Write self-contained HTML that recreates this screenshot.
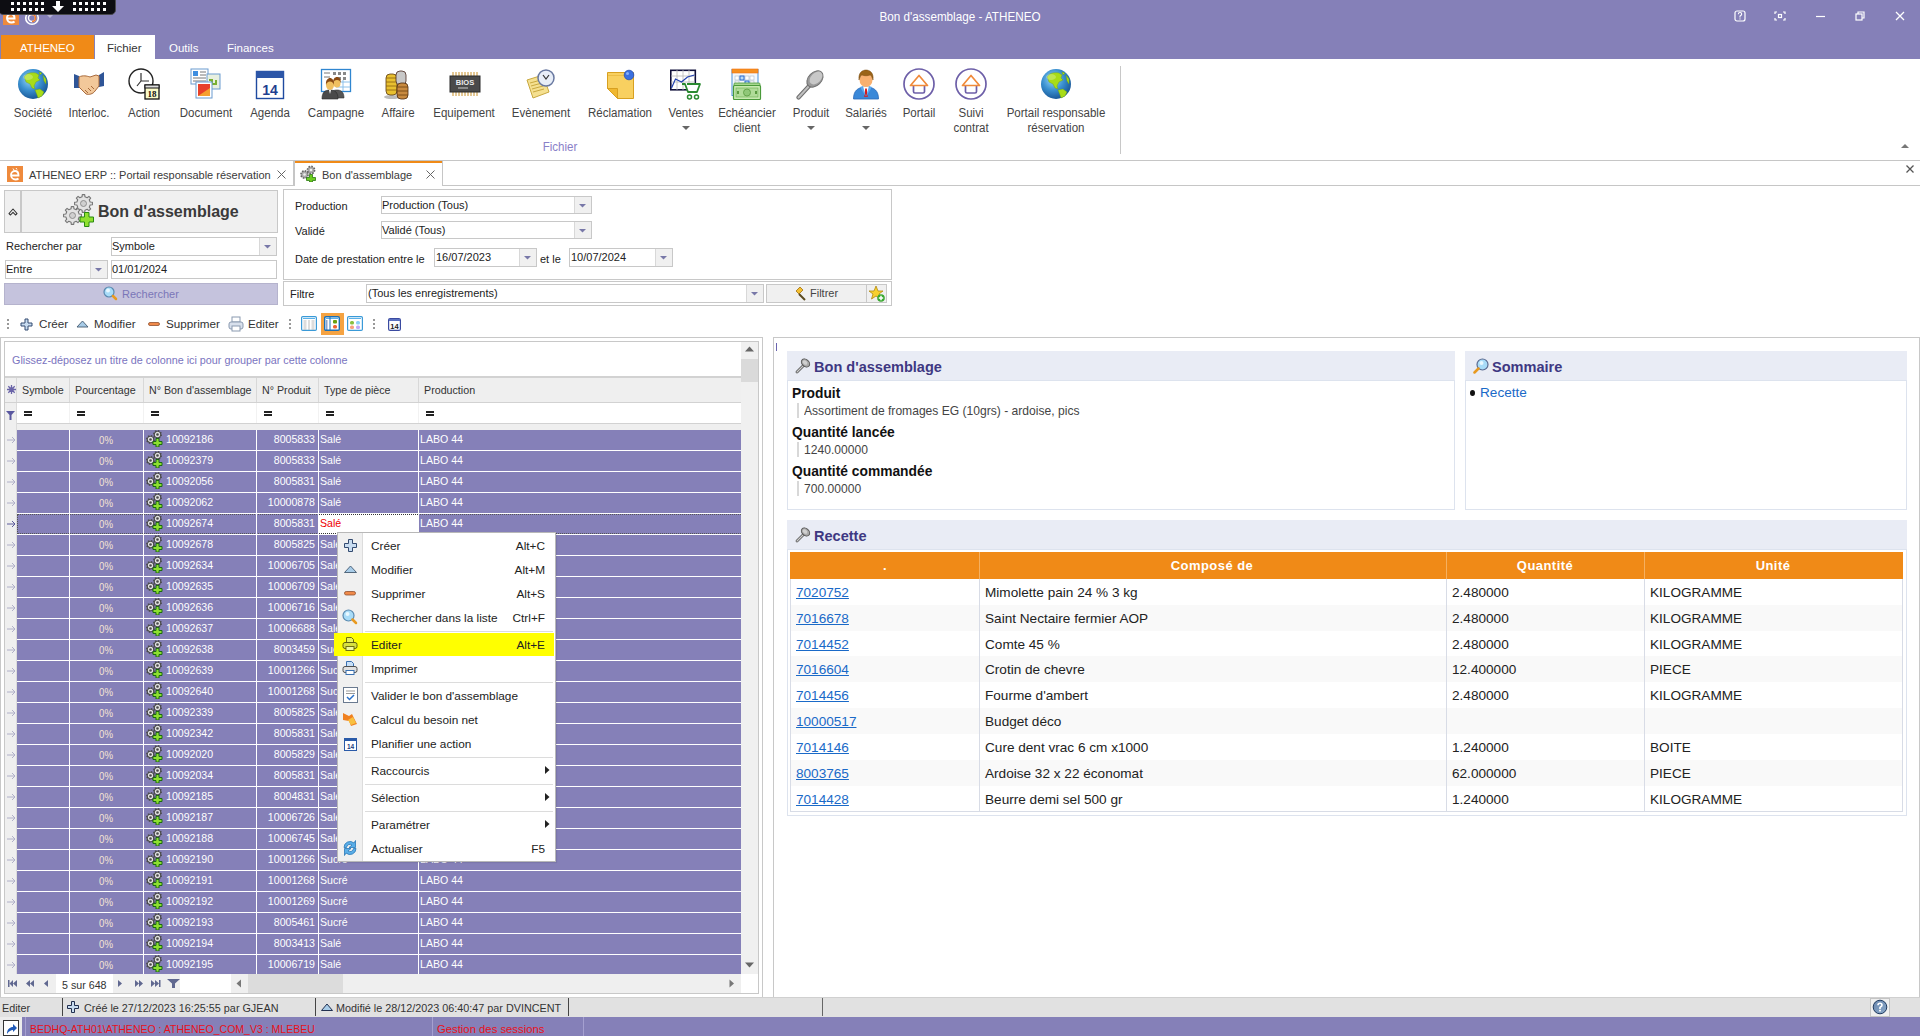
<!DOCTYPE html>
<html><head><meta charset="utf-8">
<style>
*{box-sizing:border-box;margin:0;padding:0}
html,body{width:1920px;height:1036px;overflow:hidden;background:#fff;font-family:"Liberation Sans",sans-serif;font-size:12px;color:#222}
.a{position:absolute}
.t{position:absolute;white-space:nowrap;line-height:14px}
.c{transform:translateX(-50%)}
.rl{position:absolute;white-space:nowrap;font-size:12px;color:#444;line-height:15px;transform:translateX(-50%) scaleX(.96);text-align:center}
.ic{position:absolute}
.sep{position:absolute;background:#c9c9c9}
.cell{position:absolute;white-space:nowrap;overflow:hidden;line-height:14px}
</style></head><body>
<!-- ================= TITLE BAR ================= -->
<div class="a" style="left:0;top:0;width:1920px;height:59px;background:#8580b8"></div>
<div class="t" style="left:960px;top:10px;color:#fff;font-size:12.3px;transform:translateX(-50%) scaleX(.95)">Bon d'assemblage - ATHENEO</div>
<!-- app icons -->
<div class="a" style="left:3px;top:9px;width:16px;height:16px;background:#ef8a3c"></div><svg class="ic" style="left:3px;top:9px" width="16" height="16" viewBox="0 0 16 16"><path d="M4.5 9.5h7c0-3-1.5-4.5-3.5-4.5S4 6.5 4 9s2 4.5 4.5 4.5c1.5 0 2.5-.5 3-1" fill="none" stroke="#fff" stroke-width="2"/></svg>
<svg class="ic" style="left:24px;top:10px" width="16" height="16" viewBox="0 0 16 16"><circle cx="8" cy="8" r="6.3" fill="none" stroke="#fff" stroke-width="1.6"/><circle cx="8" cy="8" r="3.5" fill="none" stroke="#fff" stroke-width="1.4"/><path d="M8 4.5a3.5 3.5 0 0 1 0 7" fill="none" stroke="#f07c2a" stroke-width="1.6"/></svg>
<svg class="ic" style="left:46px;top:14px" width="8" height="5"><path d="M0 0h8L4 4z" fill="#b7b3d6"/></svg>
<!-- remote desktop toolbar -->
<div class="a" style="left:-2px;top:-4px;width:118px;height:19px;background:#0d0d12;border:1px solid #4a4a4e;border-radius:5px"></div>
<svg class="ic" style="left:10px;top:1px" width="100" height="12" viewBox="0 0 100 12">
<g fill="#fff">
<rect x="1" y="1" width="3" height="3"/><rect x="7" y="1" width="3" height="3"/><rect x="13" y="1" width="3" height="3"/><rect x="19" y="1" width="3" height="3"/><rect x="25" y="1" width="3" height="3"/><rect x="31" y="1" width="3" height="3"/>
<rect x="1" y="7" width="3" height="3"/><rect x="7" y="7" width="3" height="3"/><rect x="13" y="7" width="3" height="3"/><rect x="19" y="7" width="3" height="3"/><rect x="25" y="7" width="3" height="3"/><rect x="31" y="7" width="3" height="3"/>
<rect x="63" y="1" width="3" height="3"/><rect x="69" y="1" width="3" height="3"/><rect x="75" y="1" width="3" height="3"/><rect x="81" y="1" width="3" height="3"/><rect x="87" y="1" width="3" height="3"/><rect x="93" y="1" width="3" height="3"/>
<rect x="63" y="7" width="3" height="3"/><rect x="69" y="7" width="3" height="3"/><rect x="75" y="7" width="3" height="3"/><rect x="81" y="7" width="3" height="3"/><rect x="87" y="7" width="3" height="3"/><rect x="93" y="7" width="3" height="3"/>
<path d="M46 0h4v5h4l-6 6-6-6h4z"/>
</g></svg>
<!-- window controls -->
<svg class="ic" style="left:1730px;top:8px" width="180" height="18" viewBox="0 0 180 18">
<g fill="none" stroke="#fff" stroke-width="1.2">
<rect x="5" y="3" width="10" height="10" rx="2"/>
<path d="M45 6V4h2M53 4h2v2M55 10v2h-2M47 12h-2v-2"/><rect x="48.5" y="6.5" width="3" height="3"/>
<path d="M86 8.5h9"/>
<rect x="126" y="6" width="6" height="6"/><path d="M128 6V4h6v6h-2"/>
<path d="M166 4l8 8M174 4l-8 8" stroke-width="1.3"/>
</g>
<path d="M8.3 6.3q0-1.8 1.7-1.8t1.7 1.6q0 1-1 1.5t-.7 1.4v.6" fill="none" stroke="#fff" stroke-width="1.1"/><rect x="9.45" y="10.4" width="1.1" height="1.1" fill="#fff"/>
</svg>
<!-- ribbon tabs -->
<div class="a" style="left:1px;top:35px;width:93px;height:24px;background:#f08a17"></div>
<div class="t" style="left:20px;top:41px;color:#fff;font-size:11.5px">ATHENEO</div>
<div class="a" style="left:95px;top:35px;width:60px;height:24px;background:#fff"></div>
<div class="t" style="left:107px;top:41px;color:#333;font-size:11.5px">Fichier</div>
<div class="t" style="left:169px;top:41px;color:#fff;font-size:11.5px">Outils</div>
<div class="t" style="left:227px;top:41px;color:#fff;font-size:11.5px">Finances</div>
<!-- ================= RIBBON BODY ================= -->
<div class="a" style="left:0;top:160px;width:1920px;height:1px;background:#c6c6c6"></div>
<!-- Société globe -->
<svg class="ic" style="left:17px;top:68px" width="32" height="32" viewBox="0 0 32 32">
<defs><radialGradient id="gb" cx="40%" cy="35%" r="65%"><stop offset="0" stop-color="#9ad8f8"/><stop offset=".55" stop-color="#3a90d0"/><stop offset="1" stop-color="#1a5a9a"/></radialGradient></defs>
<circle cx="16" cy="16" r="15" fill="url(#gb)"/>
<path d="M7 9C9 5 14 4 19 5l3 2-1 3 2 2-4 2-2 4 1 3-3-1-2-4-4-2-1-3zM18 22l5-1 4 3-2 4-4 2-1-3zM26 7l3 4 0 5-2-3zM22 4l3 1-2 2z" fill="#a8dc18" stroke="#6a9a10" stroke-width=".4"/><ellipse cx="11" cy="9" rx="5" ry="3" fill="#fff" opacity=".25"/>
</svg>
<!-- Interloc handshake -->
<svg class="ic" style="left:73px;top:70px" width="32" height="28" viewBox="0 0 32 28">
<path d="M1 4l5 2v12l-5 0z" fill="#2f5597"/><path d="M31 2l-5 3v12l5-1z" fill="#2f5597"/>
<path d="M6 7c4-2 8-1 11 0l6-2 3 1v10l-4 5c-2 3-6 4-9 3l-7-7V7z" fill="#f2c89a" stroke="#a86a3c" stroke-width="1"/>
<path d="M12 20l3 3M15 18l3 3M18 16l3 3" stroke="#a86a3c" stroke-width="1"/>
</svg>
<!-- Action clock+calendar -->
<svg class="ic" style="left:128px;top:68px" width="32" height="32" viewBox="0 0 32 32">
<circle cx="13" cy="13" r="12" fill="#fff" stroke="#222" stroke-width="1.4"/>
<path d="M13 5v8h8M13 13l-4 5" stroke="#333" stroke-width="1.2" fill="none"/>
<rect x="17" y="17" width="14" height="14" fill="#fafac8" stroke="#111" stroke-width="1.3"/>
<rect x="17" y="17" width="14" height="3" fill="#ddd" stroke="#111" stroke-width="1"/>
<text x="24" y="29" font-size="9" font-weight="bold" text-anchor="middle" fill="#111" font-family="Liberation Serif">18</text>
</svg>
<!-- Document -->
<svg class="ic" style="left:190px;top:68px" width="32" height="32" viewBox="0 0 32 32">
<rect x="1" y="1" width="17" height="15" fill="#fff" stroke="#6b9bd0"/><rect x="3" y="3" width="5" height="5" fill="#3e8ee0"/><path d="M10 4h6M10 7h6M3 10h13M3 13h13" stroke="#777"/>
<rect x="17" y="6" width="13" height="15" fill="#e8f0e0" stroke="#6b9bd0"/><path d="M19 12h3v4h4v-4" fill="none" stroke="#7ab030" stroke-width="2"/>
<rect x="6" y="14" width="16" height="16" fill="#fff" stroke="#6b9bd0"/><rect x="8" y="16" width="12" height="12" fill="#e8402a"/><path d="M8 28l12-8v8z" fill="#f5a030"/>
</svg>
<!-- Agenda -->
<svg class="ic" style="left:255px;top:70px" width="30" height="30" viewBox="0 0 30 30">
<rect x="1.5" y="1.5" width="27" height="27" fill="#fff" stroke="#1f4aa0" stroke-width="1.4"/>
<rect x="1" y="1" width="28" height="7" fill="#2c56a8"/>
<text x="15" y="25" font-size="14" font-weight="bold" text-anchor="middle" fill="#1f3f90" font-family="Liberation Sans">14</text>
</svg>
<!-- Campagne -->
<svg class="ic" style="left:320px;top:68px" width="32" height="32" viewBox="0 0 32 32">
<rect x="1.5" y="1.5" width="29" height="22" fill="#fff" stroke="#2f86d0" stroke-width="1.3"/>
<path d="M4 5h6M4 9h6" stroke="#777"/><g fill="#888"><rect x="13" y="4" width="3" height="3"/><rect x="18" y="4" width="3" height="3"/><rect x="23" y="4" width="3" height="3"/><rect x="18" y="9" width="3" height="3"/><rect x="23" y="9" width="3" height="3"/></g>
<path d="M16 14h14M16 19h14M23 12v11" stroke="#8cc0ea"/>
<path d="M10 30c0-6 3-8 7-8s7 2 7 8z" fill="#555" stroke="#333" stroke-width=".6"/>
<ellipse cx="17" cy="15" rx="3.5" ry="4.5" fill="#f0c060"/><path d="M13.3 15c-.5-4 1.5-6 3.7-6s4.2 2 3.7 6c-.5-2-1.5-3-3.7-3s-3.2 1-3.7 3z" fill="#8a4a12"/>
<path d="M2 31c0-7 3-9 8-9s8 2 8 9z" fill="#4a4a4a" stroke="#2a2a2a" stroke-width=".6"/>
<path d="M9 22l1 4 1-4z" fill="#fff"/>
<ellipse cx="10" cy="17" rx="4" ry="5" fill="#f0c060"/><path d="M6 17c-.5-5 2-7 4-7s4.5 2 4 7c-.5-2-2-3.5-4-3.5S6.5 15 6 17z" fill="#8a4a12"/>
</svg>
<!-- Affaire coins -->
<svg class="ic" style="left:383px;top:70px" width="30" height="30" viewBox="0 0 30 30">
<ellipse cx="9" cy="27" rx="8" ry="2" fill="#bbb"/>
<rect x="3" y="4" width="11" height="21" rx="4" fill="#e8c030" stroke="#5a3a10" stroke-width=".8"/>
<path d="M3 8h11M3 12h11M3 16h11M3 20h11" stroke="#8a6010" stroke-width=".8"/>
<rect x="13" y="1" width="10" height="14" rx="4" fill="#c8c8c8" stroke="#4a2a20" stroke-width=".8"/>
<rect x="14" y="13" width="11" height="16" rx="4" fill="#c88a40" stroke="#4a2a10" stroke-width=".8"/>
<path d="M14 17h11M14 21h11M14 25h11" stroke="#6a4010" stroke-width=".8"/>
</svg>
<!-- Equipement BIOS -->
<svg class="ic" style="left:449px;top:72px" width="32" height="24" viewBox="0 0 32 24">
<g stroke="#c89028" stroke-width="1"><path d="M4 0v4M7 0v4M10 0v4M13 0v4M16 0v4M19 0v4M22 0v4M25 0v4M28 0v4M4 20v4M7 20v4M10 20v4M13 20v4M16 20v4M19 20v4M22 20v4M25 20v4M28 20v4"/></g>
<rect x="1" y="4" width="30" height="16" fill="#4a4a4a" stroke="#2a2a2a"/>
<text x="16" y="13" font-size="7.5" font-weight="bold" text-anchor="middle" fill="#eee" font-family="Liberation Sans">BIOS</text>
<path d="M9 16h10" stroke="#ccc"/>
</svg>
<!-- Evènement -->
<svg class="ic" style="left:525px;top:68px" width="32" height="32" viewBox="0 0 32 32">
<path d="M2 12l16-5 6 17-16 6z" fill="#f5e090" stroke="#c8a840"/>
<path d="M5 15l11-3M6 18l11-3M7 21l11-3M8 24l11-3" stroke="#c8a840"/>
<circle cx="21" cy="10" r="8" fill="#e8eef8" stroke="#6878a0" stroke-width="1.5"/>
<path d="M18 7l3 4 3-4" stroke="#333" fill="none" stroke-width="1.2"/>
</svg>
<!-- Réclamation -->
<svg class="ic" style="left:604px;top:68px" width="32" height="32" viewBox="0 0 32 32">
<path d="M3.5 4.5h26v26h-16l-10-10z" fill="#f8d060" stroke="#d8a020" stroke-width="1"/>
<path d="M3.5 20.5h10v10z" fill="#f0b830" stroke="#d8a020" stroke-width="1" stroke-linejoin="round"/>
<path d="M4 7.5h25" stroke="#e8b840" stroke-width=".8"/>
<circle cx="25" cy="7" r="4.8" fill="#3a70e0" stroke="#2a50b0" stroke-width=".8"/><circle cx="23.5" cy="5.5" r="1.5" fill="#8ab0f8"/>
</svg>
<!-- Ventes -->
<svg class="ic" style="left:670px;top:68px" width="32" height="32" viewBox="0 0 32 32">
<rect x="0.8" y="2.3" width="24.5" height="19.5" fill="#fff" stroke="#10103a" stroke-width="1.6"/>
<path d="M1 8h24M1 14h24M7 2v20M13 2v20M19 2v20" stroke="#b8b8b8" stroke-width=".8"/>
<path d="M1.5 20l4-9 6 3 6-5 7-2" stroke="#2040b0" stroke-width="1.2" fill="none"/>
<path d="M12 16h3l3 8h9l3-8H17" fill="#fff" stroke="#2a8a30" stroke-width="1.8" stroke-linejoin="round"/>
<circle cx="19.5" cy="29" r="2" fill="#fff" stroke="#2a8a30" stroke-width="1.5"/><circle cx="26.5" cy="29" r="2" fill="#fff" stroke="#2a8a30" stroke-width="1.5"/>
</svg>
<!-- Echéancier -->
<svg class="ic" style="left:731px;top:68px" width="32" height="32" viewBox="0 0 32 32">
<rect x="1" y="1.5" width="26" height="26" fill="#f4f8fc" stroke="#4a90d8"/>
<rect x="1" y="1" width="26" height="4" fill="#f59020" stroke="#f07010" stroke-width=".6"/>
<g fill="#fff" stroke="#aab8c8" stroke-width=".6"><rect x="4" y="8" width="4" height="4"/><rect x="9" y="8" width="4" height="4"/><rect x="14" y="8" width="4" height="4"/><rect x="19" y="8" width="4" height="4"/><rect x="4" y="13" width="4" height="3"/><rect x="19" y="13" width="4" height="3"/></g>
<rect x="9" y="8" width="4" height="4" fill="#b8dcf8" stroke="#2a6ad0" stroke-width="1"/><rect x="14" y="13" width="4" height="3" fill="#b8dcf8" stroke="#2a6ad0" stroke-width="1"/>
<rect x="3" y="15" width="26" height="4" rx="1" fill="#a8d890" stroke="#4a9a3a" stroke-width=".8"/>
<rect x="2.5" y="17.5" width="27" height="14" rx="1" fill="#c8eab0" stroke="#4a9a3a" stroke-width="1.2"/>
<rect x="5" y="20" width="22" height="9" fill="#b0dc98" stroke="#6aaa50" stroke-width=".6"/>
<circle cx="16" cy="24.5" r="3.5" fill="#90c878" stroke="#5a9a40" stroke-width=".8"/>
<rect x="6" y="23" width="2" height="3" fill="#5a9a40"/><rect x="24" y="23" width="2" height="3" fill="#5a9a40"/>
</svg>
<!-- Produit pin -->
<svg class="ic" style="left:795px;top:68px" width="32" height="32" viewBox="0 0 32 32">
<path d="M3.5 29.5L15 17" stroke="#707070" stroke-width="4.2" stroke-linecap="round"/>
<path d="M3.5 29.5L15 17" stroke="#c0c0c0" stroke-width="2" stroke-linecap="round"/>
<ellipse cx="20" cy="11" rx="9.5" ry="6.5" transform="rotate(-45 20 11)" fill="#9a9a9a" stroke="#707070" stroke-width="1"/>
<ellipse cx="21" cy="10" rx="7.5" ry="5" transform="rotate(-45 21 10)" fill="#c8c8c8"/>
</svg>
<!-- Salariés -->
<svg class="ic" style="left:850px;top:68px" width="32" height="32" viewBox="0 0 32 32">
<path d="M3.5 31c0-8 4-12 12.5-12s12.5 4 12.5 12z" fill="#3a88d8" stroke="#2a68b8" stroke-width=".8"/>
<path d="M12 19l4 10 4-10z" fill="#fff"/><path d="M15.2 20.5h1.6l.9 8.5h-3.4z" fill="#d81818"/>
<path d="M10 19l6 10-3-11zM22 19l-6 10 3-11z" fill="#5aa8f0"/>
<ellipse cx="16" cy="12" rx="6.5" ry="7" fill="#f8b070"/>
<path d="M9 12c-1-8 4-10 7-10s8 2 7 10c-1-3-2-5-3-5-2 1-6 1-8 0-1 0-2 2-3 5z" fill="#9a6418" stroke="#7a4a10" stroke-width=".5"/>
</svg>
<!-- Portail -->
<svg class="ic" style="left:903px;top:68px" width="32" height="32" viewBox="0 0 32 32">
<circle cx="16" cy="16" r="15" fill="none" stroke="#6d5fa8" stroke-width="1.7"/>
<path d="M10.5 18v5.5q0 1.5 1.5 1.5h8q1.5 0 1.5-1.5V18" fill="none" stroke="#6d5fa8" stroke-width="1.7"/>
<path d="M7.5 17.5L16 7.5l8.5 10z" fill="none" stroke="#f08a3a" stroke-width="1.7" stroke-linejoin="round"/>
</svg>
<!-- Suivi contrat -->
<svg class="ic" style="left:955px;top:68px" width="32" height="32" viewBox="0 0 32 32">
<circle cx="16" cy="16" r="15" fill="none" stroke="#6d5fa8" stroke-width="1.7"/>
<path d="M10.5 18v5.5q0 1.5 1.5 1.5h8q1.5 0 1.5-1.5V18" fill="none" stroke="#6d5fa8" stroke-width="1.7"/>
<path d="M7.5 17.5L16 7.5l8.5 10z" fill="none" stroke="#f08a3a" stroke-width="1.7" stroke-linejoin="round"/>
</svg>
<!-- Portail responsable globe -->
<svg class="ic" style="left:1040px;top:68px" width="32" height="32" viewBox="0 0 32 32">
<circle cx="16" cy="16" r="15" fill="url(#gb)"/>
<path d="M7 9C9 5 14 4 19 5l3 2-1 3 2 2-4 2-2 4 1 3-3-1-2-4-4-2-1-3zM18 22l5-1 4 3-2 4-4 2-1-3zM26 7l3 4 0 5-2-3zM22 4l3 1-2 2z" fill="#a8dc18" stroke="#6a9a10" stroke-width=".4"/><ellipse cx="11" cy="9" rx="5" ry="3" fill="#fff" opacity=".25"/>
</svg>
<!-- labels -->
<div class="rl" style="left:33px;top:106px">Société</div>
<div class="rl" style="left:89px;top:106px">Interloc.</div>
<div class="rl" style="left:144px;top:106px">Action</div>
<div class="rl" style="left:206px;top:106px">Document</div>
<div class="rl" style="left:270px;top:106px">Agenda</div>
<div class="rl" style="left:336px;top:106px">Campagne</div>
<div class="rl" style="left:398px;top:106px">Affaire</div>
<div class="rl" style="left:464px;top:106px">Equipement</div>
<div class="rl" style="left:541px;top:106px">Evènement</div>
<div class="rl" style="left:620px;top:106px">Réclamation</div>
<div class="rl" style="left:686px;top:106px">Ventes</div>
<div class="rl" style="left:747px;top:106px">Echéancier<br>client</div>
<div class="rl" style="left:811px;top:106px">Produit</div>
<div class="rl" style="left:866px;top:106px">Salariés</div>
<div class="rl" style="left:919px;top:106px">Portail</div>
<div class="rl" style="left:971px;top:106px">Suivi<br>contrat</div>
<div class="rl" style="left:1056px;top:106px">Portail responsable<br>réservation</div>
<svg class="ic" style="left:681px;top:126px" width="10" height="5"><path d="M1 0h8L5 4z" fill="#666"/></svg>
<svg class="ic" style="left:806px;top:126px" width="10" height="5"><path d="M1 0h8L5 4z" fill="#666"/></svg>
<svg class="ic" style="left:861px;top:126px" width="10" height="5"><path d="M1 0h8L5 4z" fill="#666"/></svg>
<div class="rl" style="left:560px;top:140px;color:#8a80c8">Fichier</div>
<div class="a" style="left:1120px;top:66px;width:1px;height:88px;background:#c8c8c8"></div>
<svg class="ic" style="left:1900px;top:143px" width="10" height="6"><path d="M1 5l4-4 4 4z" fill="#777"/></svg>
<!-- ================= DOC TABS ================= -->
<div class="a" style="left:0;top:185px;width:1920px;height:1px;background:#c6c6c6"></div>
<div class="a" style="left:294px;top:161px;width:149px;height:25px;background:#fff;border-left:1px solid #c6c6c6;border-right:1px solid #c6c6c6"></div>
<div class="a" style="left:295px;top:161px;width:147px;height:2px;background:#f08a17"></div>
<div class="a" style="left:293px;top:161px;width:1px;height:24px;background:#c6c6c6"></div>
<!-- tab1 -->
<div class="a" style="left:7px;top:166px;width:16px;height:16px;background:#ef8a3c"></div>
<svg class="ic" style="left:7px;top:166px" width="16" height="16" viewBox="0 0 16 16"><path d="M4.5 9.5h7c0-3-1.5-4.5-3.5-4.5S4 6.5 4 9s2 4.5 4.5 4.5c1.5 0 2.5-.5 3-1" fill="none" stroke="#fff" stroke-width="1.8"/><path d="M6 2.5l1 1.5M9 2l1 1.5" stroke="#fff" stroke-width="1"/></svg>
<div class="t" style="left:29px;top:168px;font-size:11px;color:#3a3a3a">ATHENEO ERP :: Portail responsable réservation</div>
<svg class="ic" style="left:277px;top:170px" width="9" height="9"><path d="M.5 .5l8 8M8.5 .5l-8 8" stroke="#666" stroke-width="1"/></svg>
<!-- tab2 -->
<svg class="ic" style="left:300px;top:165px" width="17" height="17" viewBox="0 0 17 17">
<circle cx="11" cy="5" r="3.6" fill="#aaa" stroke="#666" stroke-width="1.6" stroke-dasharray="1.6 1.2"/><circle cx="11" cy="5" r="1.3" fill="#eee"/>
<circle cx="4.5" cy="9.5" r="3.6" fill="#aaa" stroke="#666" stroke-width="1.6" stroke-dasharray="1.6 1.2"/><circle cx="4.5" cy="9.5" r="1.3" fill="#eee"/>
<path d="M9.5 9.5h3v3h3v3h-3v1.5h-3V15.5h-3v-3h3z" fill="#6ccc20" stroke="#2a7a10" stroke-width=".8"/>
</svg>
<div class="t" style="left:322px;top:168px;font-size:11px;color:#3a3a3a">Bon d'assemblage</div>
<svg class="ic" style="left:426px;top:170px" width="9" height="9"><path d="M.5 .5l8 8M8.5 .5l-8 8" stroke="#666" stroke-width="1"/></svg>
<svg class="ic" style="left:1906px;top:165px" width="8" height="8"><path d="M.5 .5l7 7M7.5 .5l-7 7" stroke="#555" stroke-width="1.3"/></svg>

<!-- ================= LEFT SEARCH PANEL ================= -->
<div class="a" style="left:4px;top:190px;width:274px;height:43px;background:#f0f0f0;border:1px solid #c8c8c8"></div>
<div class="a" style="left:20px;top:191px;width:2px;height:41px;background:#c8c8c8"></div>
<svg class="ic" style="left:8px;top:207px" width="10" height="9" viewBox="0 0 10 9"><path d="M1 6.5L5 2l4 4.5L7.5 8 5 5.3 2.5 8z" fill="none" stroke="#333" stroke-width="1.1" stroke-linejoin="round"/></svg>
<!-- gears icon -->
<svg class="ic" style="left:62px;top:194px" width="34" height="34" viewBox="0 0 34 34">
<path d="M28.14 8.04 L30.42 8.27 L30.42 10.73 L28.14 10.96 L27.23 13.17 L28.68 14.93 L26.93 16.68 L25.17 15.23 L22.96 16.14 L22.73 18.42 L20.27 18.42 L20.04 16.14 L17.83 15.23 L16.07 16.68 L14.32 14.93 L15.77 13.17 L14.86 10.96 L12.58 10.73 L12.58 8.27 L14.86 8.04 L15.77 5.83 L14.32 4.07 L16.07 2.32 L17.83 3.77 L20.04 2.86 L20.27 0.58 L22.73 0.58 L22.96 2.86 L25.17 3.77 L26.93 2.32 L28.68 4.07 L27.23 5.83Z" fill="#e4e4e4" stroke="#777" stroke-width="1.1" stroke-linejoin="round"/><circle cx="21.5" cy="9.5" r="3" fill="#d0d0d0" stroke="#888" stroke-width=".9"/>
<path d="M17.14 20.04 L19.42 20.27 L19.42 22.73 L17.14 22.96 L16.23 25.17 L17.68 26.93 L15.93 28.68 L14.17 27.23 L11.96 28.14 L11.73 30.42 L9.27 30.42 L9.04 28.14 L6.83 27.23 L5.07 28.68 L3.32 26.93 L4.77 25.17 L3.86 22.96 L1.58 22.73 L1.58 20.27 L3.86 20.04 L4.77 17.83 L3.32 16.07 L5.07 14.32 L6.83 15.77 L9.04 14.86 L9.27 12.58 L11.73 12.58 L11.96 14.86 L14.17 15.77 L15.93 14.32 L17.68 16.07 L16.23 17.83Z" fill="#e4e4e4" stroke="#777" stroke-width="1.1" stroke-linejoin="round"/><circle cx="10.5" cy="21.5" r="3" fill="#d0d0d0" stroke="#888" stroke-width=".9"/>
<path d="M22.5 18.5h4.5v4.5h4.5v5h-4.5v4.5h-4.5v-4.5H18v-5h4.5z" fill="#90e030" stroke="#2a8a10" stroke-width="1"/>
</svg>
<div class="t" style="left:98px;top:202px;font-size:16px;line-height:20px;font-weight:bold;color:#3a3a3a">Bon d'assemblage</div>
<div class="t" style="left:6px;top:239px;font-size:11px;color:#222">Rechercher par</div>
<div class="a" style="left:111px;top:237px;width:166px;height:19px;background:#fff;border:1px solid #c8c8c8"></div>
<div class="a" style="left:259px;top:238px;width:17px;height:17px;background:#f0f0f0;border-left:1px solid #d8d8d8"></div>
<svg class="ic" style="left:264px;top:245px" width="8" height="4"><path d="M0 0h7L3.5 3.5z" fill="#7878a8"/></svg>
<div class="t" style="left:112px;top:239px;font-size:11px;color:#222">Symbole</div>
<div class="a" style="left:5px;top:260px;width:103px;height:19px;background:#fff;border:1px solid #c8c8c8"></div>
<div class="a" style="left:90px;top:261px;width:17px;height:17px;background:#f0f0f0;border-left:1px solid #d8d8d8"></div>
<svg class="ic" style="left:95px;top:268px" width="8" height="4"><path d="M0 0h7L3.5 3.5z" fill="#7878a8"/></svg>
<div class="t" style="left:6px;top:262px;font-size:11px;color:#222">Entre</div>
<div class="a" style="left:111px;top:260px;width:166px;height:19px;background:#fff;border:1px solid #c8c8c8"></div>
<div class="t" style="left:112px;top:262px;font-size:11px;color:#222">01/01/2024</div>
<div class="a" style="left:4px;top:283px;width:274px;height:22px;background:#c5c3dd;border:1px solid #b5b3cd"></div>
<svg class="ic" style="left:103px;top:286px" width="15" height="15" viewBox="0 0 15 15"><circle cx="6" cy="6" r="5" fill="#a8dcf8" stroke="#5a8ab0" stroke-width="1.2"/><circle cx="5" cy="4.5" r="2" fill="#e8f8ff"/><path d="M10 10l3 3" stroke="#e89a20" stroke-width="2.5" stroke-linecap="round"/></svg>
<div class="t" style="left:122px;top:287px;font-size:11px;color:#7a76b8">Rechercher</div>

<!-- ================= FILTER PANEL ================= -->
<div class="a" style="left:283px;top:189px;width:609px;height:91px;border:1px solid #c8c8c8;background:#fff"></div>
<div class="t" style="left:295px;top:199px;font-size:11px;color:#222">Production</div>
<div class="a" style="left:381px;top:196px;width:211px;height:18px;border:1px solid #c8c8c8;background:#fff"></div>
<div class="a" style="left:574px;top:197px;width:17px;height:16px;background:#f0f0f0;border-left:1px solid #d8d8d8"></div>
<svg class="ic" style="left:579px;top:204px" width="8" height="4"><path d="M0 0h7L3.5 3.5z" fill="#7878a8"/></svg>
<div class="t" style="left:382px;top:198px;font-size:11px;color:#222">Production (Tous)</div>
<div class="t" style="left:295px;top:224px;font-size:11px;color:#222">Validé</div>
<div class="a" style="left:381px;top:221px;width:211px;height:18px;border:1px solid #c8c8c8;background:#fff"></div>
<div class="a" style="left:574px;top:222px;width:17px;height:16px;background:#f0f0f0;border-left:1px solid #d8d8d8"></div>
<svg class="ic" style="left:579px;top:229px" width="8" height="4"><path d="M0 0h7L3.5 3.5z" fill="#7878a8"/></svg>
<div class="t" style="left:382px;top:223px;font-size:11px;color:#222">Validé (Tous)</div>
<div class="t" style="left:295px;top:252px;font-size:11px;color:#222">Date de prestation entre le</div>
<div class="a" style="left:434px;top:248px;width:103px;height:19px;border:1px solid #c8c8c8;background:#fff"></div>
<div class="a" style="left:519px;top:249px;width:17px;height:17px;background:#f0f0f0;border-left:1px solid #d8d8d8"></div>
<svg class="ic" style="left:524px;top:256px" width="8" height="4"><path d="M0 0h7L3.5 3.5z" fill="#7878a8"/></svg>
<div class="t" style="left:436px;top:250px;font-size:11px;color:#222">16/07/2023</div>
<div class="t" style="left:540px;top:252px;font-size:11px;color:#222">et le</div>
<div class="a" style="left:569px;top:248px;width:104px;height:19px;border:1px solid #c8c8c8;background:#fff"></div>
<div class="a" style="left:655px;top:249px;width:17px;height:17px;background:#f0f0f0;border-left:1px solid #d8d8d8"></div>
<svg class="ic" style="left:660px;top:256px" width="8" height="4"><path d="M0 0h7L3.5 3.5z" fill="#7878a8"/></svg>
<div class="t" style="left:571px;top:250px;font-size:11px;color:#222">10/07/2024</div>
<!-- filtre row -->
<div class="a" style="left:283px;top:281px;width:609px;height:25px;border:1px solid #c8c8c8;background:#fff"></div>
<div class="t" style="left:290px;top:287px;font-size:11px;color:#222">Filtre</div>
<div class="a" style="left:366px;top:284px;width:398px;height:19px;border:1px solid #c8c8c8;background:#fff"></div>
<div class="a" style="left:746px;top:285px;width:17px;height:17px;background:#f0f0f0;border-left:1px solid #d8d8d8"></div>
<svg class="ic" style="left:751px;top:292px" width="8" height="4"><path d="M0 0h7L3.5 3.5z" fill="#7878a8"/></svg>
<div class="t" style="left:368px;top:286px;font-size:11px;color:#222">(Tous les enregistrements)</div>
<div class="a" style="left:766px;top:284px;width:121px;height:19px;border:1px solid #c8c8c8;background:#f0f0f0"></div>
<div class="a" style="left:866px;top:285px;width:1px;height:17px;background:#c8c8c8"></div>
<svg class="ic" style="left:793px;top:286px" width="15" height="15" viewBox="0 0 15 15"><path d="M3 5l4-4 3 3-4 4z" fill="#f5c030" stroke="#a07010" stroke-width=".8"/><path d="M6 8l6 6" stroke="#5a4a20" stroke-width="2"/></svg>
<div class="t" style="left:810px;top:286px;font-size:11px;color:#444">Filtrer</div>
<svg class="ic" style="left:868px;top:285px" width="17" height="17" viewBox="0 0 17 17"><path d="M8 1l2 5h5l-4 3 1.5 5L8 11l-4.5 3L5 9 1 6h5z" fill="#f8d030" stroke="#b08810" stroke-width=".8"/><circle cx="13" cy="13" r="3.8" fill="#3aa830"/><path d="M13 10.8v4.4M10.8 13h4.4" stroke="#fff" stroke-width="1.5"/></svg>

<!-- ================= TOOLBAR ================= -->
<svg class="ic" style="left:7px;top:319px" width="3" height="11"><rect x="0" y="0" width="2" height="2" fill="#999"/><rect x="0" y="4" width="2" height="2" fill="#999"/><rect x="0" y="8" width="2" height="2" fill="#999"/></svg>
<svg class="ic" style="left:20px;top:318px" width="13" height="13" viewBox="0 0 13 13"><path d="M5 1h3v4h4v3H8v4H5V8H1V5h4z" fill="#c8dcf0" stroke="#334a70" stroke-width="1"/></svg>
<div class="t" style="left:39px;top:317px;font-size:11.7px;color:#333">Créer</div>
<svg class="ic" style="left:76px;top:320px" width="13" height="8" viewBox="0 0 13 8"><path d="M1 7l5.5-6 5.5 6z" fill="#a8cce8" stroke="#445a70" stroke-width=".9"/></svg>
<div class="t" style="left:94px;top:317px;font-size:11.7px;color:#333">Modifier</div>
<svg class="ic" style="left:148px;top:322px" width="12" height="4"><rect x=".5" y=".5" width="11" height="3" rx="1.5" fill="#f08a4a" stroke="#905030" stroke-width=".8"/></svg>
<div class="t" style="left:166px;top:317px;font-size:11.7px;color:#333">Supprimer</div>
<svg class="ic" style="left:228px;top:316px" width="16" height="16" viewBox="0 0 16 16"><rect x="4" y="1" width="8" height="5" fill="#fff" stroke="#8a9ab0"/><rect x="1" y="6" width="14" height="7" rx="2" fill="#d8e0ec" stroke="#8a9ab0"/><rect x="4" y="10" width="8" height="5" fill="#fff" stroke="#8a9ab0"/></svg>
<div class="t" style="left:248px;top:317px;font-size:11.7px;color:#333">Editer</div>
<svg class="ic" style="left:289px;top:319px" width="3" height="11"><rect x="0" y="0" width="2" height="2" fill="#999"/><rect x="0" y="4" width="2" height="2" fill="#999"/><rect x="0" y="8" width="2" height="2" fill="#999"/></svg>
<svg class="ic" style="left:301px;top:316px" width="16" height="15" viewBox="0 0 16 15"><rect x=".6" y=".6" width="14.8" height="13.8" rx="1.2" fill="#fff" stroke="#3a9ad8" stroke-width="1.2"/><rect x="2" y="2" width="12" height="1" fill="#5ab0e8"/><g stroke="#aaa" stroke-width=".8"><path d="M2.5 5h3M7 5h2M10.5 5h3M2.5 7h3M7 7h2M10.5 7h3M2.5 9h3M7 9h2M10.5 9h3M2.5 11h3M7 11h2M10.5 11h3M2.5 13h3M7 13h2M10.5 13h3"/></g></svg>
<div class="a" style="left:321px;top:313px;width:23px;height:22px;background:#f5a342"></div>
<svg class="ic" style="left:324px;top:316px" width="16" height="15" viewBox="0 0 16 15"><rect x=".7" y=".7" width="14.6" height="13.6" rx="1.2" fill="#fff" stroke="#1a70b8" stroke-width="1.4"/><rect x="2" y="2" width="12" height="1" fill="#5ab0e8"/><path d="M6 1v13" stroke="#1a70b8" stroke-width="1"/><g fill="#1a4a98"><rect x="2" y="4.5" width="1.5" height="1"/><rect x="2" y="6.5" width="1.5" height="1"/><rect x="2" y="8.5" width="1.5" height="1"/><rect x="2" y="10.5" width="1.5" height="1"/><rect x="2" y="12.5" width="1.5" height="1"/></g><rect x="9" y="4" width="4" height="3.5" rx="1" fill="#6aa010"/><rect x="9" y="9" width="4" height="3.5" rx="1.5" fill="#f06030"/></svg>
<svg class="ic" style="left:347px;top:316px" width="16" height="15" viewBox="0 0 16 15"><rect x=".6" y=".6" width="14.8" height="13.8" rx="1.2" fill="#fff" stroke="#3a9ad8" stroke-width="1.2"/><rect x="2" y="2" width="12" height="1" fill="#5ab0e8"/><rect x="3" y="5" width="4" height="3.5" rx="1.5" fill="#8ac040"/><rect x="9" y="5" width="4" height="3.5" rx="1.5" fill="#8ad0f8"/><rect x="3" y="9.5" width="4" height="3.5" rx="1.5" fill="#f8a080"/><rect x="9" y="9.5" width="4" height="3.5" rx="1.5" fill="#c0a8f8"/></svg>
<svg class="ic" style="left:373px;top:319px" width="3" height="11"><rect x="0" y="0" width="2" height="2" fill="#999"/><rect x="0" y="4" width="2" height="2" fill="#999"/><rect x="0" y="8" width="2" height="2" fill="#999"/></svg>
<svg class="ic" style="left:388px;top:318px" width="13" height="13" viewBox="0 0 13 13"><rect x=".6" y=".6" width="11.8" height="11.8" rx="1.5" fill="#fff" stroke="#3a4aa0" stroke-width="1.2"/><rect x="1" y="1" width="11" height="2" fill="#5a70c0"/><text x="6.5" y="11" font-size="7.5" text-anchor="middle" fill="#222" font-family="Liberation Sans" font-weight="bold">14</text></svg>
<!-- ================= GRID ================= -->
<div class="a" style="left:0;top:337px;width:763px;height:661px;border:1px solid #c8c8c8;border-left:1px solid #c8c8c8;background:#fff"></div>
<div class="a" style="left:4px;top:341px;width:755px;height:653px;border:1px solid #c8c8c8;background:#fff"></div>
<div class="t" style="left:12px;top:353px;font-size:10.8px;color:#7a74c0">Glissez-déposez un titre de colonne ici pour grouper par cette colonne</div>
<!-- header -->
<div class="a" style="left:5px;top:376px;width:736px;height:27px;background:#efefef;border-top:2px solid #d2d2d2;border-bottom:1px solid #d2d2d2"></div>
<div class="a" style="left:5px;top:403px;width:736px;height:21px;background:#fff;border-bottom:1px solid #d2d2d2"></div>
<div class="a" style="left:5px;top:424px;width:736px;height:6px;background:#efefef"></div>
<div class="a" style="left:5px;top:403px;width:12px;height:571px;background:#efefef;border-right:1px solid #dcdcdc"></div>

<div class="a" style="left:16px;top:378px;width:1px;height:24px;background:#d8d8d8"></div>
<div class="a" style="left:69px;top:378px;width:1px;height:24px;background:#d8d8d8"></div>
<div class="a" style="left:143px;top:378px;width:1px;height:24px;background:#d8d8d8"></div>
<div class="a" style="left:256px;top:378px;width:1px;height:24px;background:#d8d8d8"></div>
<div class="a" style="left:318px;top:378px;width:1px;height:24px;background:#d8d8d8"></div>
<div class="a" style="left:418px;top:378px;width:1px;height:24px;background:#d8d8d8"></div>
<div class="a" style="left:69px;top:403px;width:1px;height:20px;background:#f2f2f2"></div>
<div class="a" style="left:143px;top:403px;width:1px;height:20px;background:#f2f2f2"></div>
<div class="a" style="left:256px;top:403px;width:1px;height:20px;background:#f2f2f2"></div>
<div class="a" style="left:318px;top:403px;width:1px;height:20px;background:#f2f2f2"></div>
<div class="a" style="left:418px;top:403px;width:1px;height:20px;background:#f2f2f2"></div>
<svg class="ic" style="left:7px;top:385px" width="9" height="9" viewBox="0 0 9 9"><path d="M4.5 0v9M0 4.5h9M1.3 1.3l6.4 6.4M7.7 1.3l-6.4 6.4" stroke="#6a64a8" stroke-width="1.3"/><circle cx="4.5" cy="4.5" r="2.2" fill="#6a64a8"/></svg>
<svg class="ic" style="left:6px;top:411px" width="9" height="9" viewBox="0 0 9 9"><path d="M0 0h9L5.5 4v5h-2V4z" fill="#5a58a0"/></svg>
<div class="t" style="left:22px;top:383px;font-size:10.7px;color:#333">Symbole</div>
<div class="t" style="left:75px;top:383px;font-size:10.7px;color:#333">Pourcentage</div>
<div class="t" style="left:149px;top:383px;font-size:10.7px;color:#333">N° Bon d'assemblage</div>
<div class="t" style="left:262px;top:383px;font-size:10.7px;color:#333">N° Produit</div>
<div class="t" style="left:324px;top:383px;font-size:10.7px;color:#333">Type de pièce</div>
<div class="t" style="left:424px;top:383px;font-size:10.7px;color:#333">Production</div>
<div class="a" style="left:24px;top:411px;width:8px;height:1.5px;background:#222"></div><div class="a" style="left:24px;top:414px;width:8px;height:1.5px;background:#222"></div>
<div class="a" style="left:77px;top:411px;width:8px;height:1.5px;background:#222"></div><div class="a" style="left:77px;top:414px;width:8px;height:1.5px;background:#222"></div>
<div class="a" style="left:151px;top:411px;width:8px;height:1.5px;background:#222"></div><div class="a" style="left:151px;top:414px;width:8px;height:1.5px;background:#222"></div>
<div class="a" style="left:264px;top:411px;width:8px;height:1.5px;background:#222"></div><div class="a" style="left:264px;top:414px;width:8px;height:1.5px;background:#222"></div>
<div class="a" style="left:326px;top:411px;width:8px;height:1.5px;background:#222"></div><div class="a" style="left:326px;top:414px;width:8px;height:1.5px;background:#222"></div>
<div class="a" style="left:426px;top:411px;width:8px;height:1.5px;background:#222"></div><div class="a" style="left:426px;top:414px;width:8px;height:1.5px;background:#222"></div>
<div class="a" style="left:17px;top:430px;width:724px;height:20px;background:#8580b8"></div>
<svg class="ic" style="left:7px;top:436px" width="9" height="8" viewBox="0 0 9 8"><path d="M0 4h8M5 1l3 3-3 3" fill="none" stroke="#b0b0c8" stroke-width="1"/></svg>
<div class="t" style="left:106px;top:433px;font-size:10.5px;color:#f4e4d4;transform:translateX(-50%) scaleX(.92)">0%</div>
<svg class="ic" style="left:146px;top:430px" width="17" height="17" viewBox="0 0 17 17"><circle cx="11.5" cy="4.5" r="3.6" fill="#4a4a4a" stroke="#4a4a4a" stroke-width="1.8" stroke-dasharray="1.5 1.3"/><circle cx="11.5" cy="4.5" r="2" fill="none" stroke="#e0e0e0" stroke-width="1.3"/><circle cx="4.5" cy="9.5" r="3.6" fill="#4a4a4a" stroke="#4a4a4a" stroke-width="1.8" stroke-dasharray="1.5 1.3"/><circle cx="4.5" cy="9.5" r="2" fill="none" stroke="#e0e0e0" stroke-width="1.3"/><path d="M10 8.5h3v3h3v3h-3v2.5h-3v-2.5H7v-3h3z" fill="#8ee030" stroke="#1a6a10" stroke-width="1"/></svg>
<div class="t" style="left:166px;top:432px;font-size:10.6px;color:#fff">10092186</div>
<div class="t" style="left:315px;top:432px;font-size:10.6px;color:#fff;transform:translateX(-100%)">8005833</div>
<div class="t" style="left:320px;top:432px;font-size:10.6px;color:#fff">Salé</div>
<div class="t" style="left:420px;top:432px;font-size:10.6px;color:#fff">LABO 44</div>
<div class="a" style="left:17px;top:451px;width:724px;height:20px;background:#8580b8"></div>
<svg class="ic" style="left:7px;top:457px" width="9" height="8" viewBox="0 0 9 8"><path d="M0 4h8M5 1l3 3-3 3" fill="none" stroke="#b0b0c8" stroke-width="1"/></svg>
<div class="t" style="left:106px;top:454px;font-size:10.5px;color:#f4e4d4;transform:translateX(-50%) scaleX(.92)">0%</div>
<svg class="ic" style="left:146px;top:451px" width="17" height="17" viewBox="0 0 17 17"><circle cx="11.5" cy="4.5" r="3.6" fill="#4a4a4a" stroke="#4a4a4a" stroke-width="1.8" stroke-dasharray="1.5 1.3"/><circle cx="11.5" cy="4.5" r="2" fill="none" stroke="#e0e0e0" stroke-width="1.3"/><circle cx="4.5" cy="9.5" r="3.6" fill="#4a4a4a" stroke="#4a4a4a" stroke-width="1.8" stroke-dasharray="1.5 1.3"/><circle cx="4.5" cy="9.5" r="2" fill="none" stroke="#e0e0e0" stroke-width="1.3"/><path d="M10 8.5h3v3h3v3h-3v2.5h-3v-2.5H7v-3h3z" fill="#8ee030" stroke="#1a6a10" stroke-width="1"/></svg>
<div class="t" style="left:166px;top:453px;font-size:10.6px;color:#fff">10092379</div>
<div class="t" style="left:315px;top:453px;font-size:10.6px;color:#fff;transform:translateX(-100%)">8005833</div>
<div class="t" style="left:320px;top:453px;font-size:10.6px;color:#fff">Salé</div>
<div class="t" style="left:420px;top:453px;font-size:10.6px;color:#fff">LABO 44</div>
<div class="a" style="left:17px;top:472px;width:724px;height:20px;background:#8580b8"></div>
<svg class="ic" style="left:7px;top:478px" width="9" height="8" viewBox="0 0 9 8"><path d="M0 4h8M5 1l3 3-3 3" fill="none" stroke="#b0b0c8" stroke-width="1"/></svg>
<div class="t" style="left:106px;top:475px;font-size:10.5px;color:#f4e4d4;transform:translateX(-50%) scaleX(.92)">0%</div>
<svg class="ic" style="left:146px;top:472px" width="17" height="17" viewBox="0 0 17 17"><circle cx="11.5" cy="4.5" r="3.6" fill="#4a4a4a" stroke="#4a4a4a" stroke-width="1.8" stroke-dasharray="1.5 1.3"/><circle cx="11.5" cy="4.5" r="2" fill="none" stroke="#e0e0e0" stroke-width="1.3"/><circle cx="4.5" cy="9.5" r="3.6" fill="#4a4a4a" stroke="#4a4a4a" stroke-width="1.8" stroke-dasharray="1.5 1.3"/><circle cx="4.5" cy="9.5" r="2" fill="none" stroke="#e0e0e0" stroke-width="1.3"/><path d="M10 8.5h3v3h3v3h-3v2.5h-3v-2.5H7v-3h3z" fill="#8ee030" stroke="#1a6a10" stroke-width="1"/></svg>
<div class="t" style="left:166px;top:474px;font-size:10.6px;color:#fff">10092056</div>
<div class="t" style="left:315px;top:474px;font-size:10.6px;color:#fff;transform:translateX(-100%)">8005831</div>
<div class="t" style="left:320px;top:474px;font-size:10.6px;color:#fff">Salé</div>
<div class="t" style="left:420px;top:474px;font-size:10.6px;color:#fff">LABO 44</div>
<div class="a" style="left:17px;top:493px;width:724px;height:20px;background:#8580b8"></div>
<svg class="ic" style="left:7px;top:499px" width="9" height="8" viewBox="0 0 9 8"><path d="M0 4h8M5 1l3 3-3 3" fill="none" stroke="#b0b0c8" stroke-width="1"/></svg>
<div class="t" style="left:106px;top:496px;font-size:10.5px;color:#f4e4d4;transform:translateX(-50%) scaleX(.92)">0%</div>
<svg class="ic" style="left:146px;top:493px" width="17" height="17" viewBox="0 0 17 17"><circle cx="11.5" cy="4.5" r="3.6" fill="#4a4a4a" stroke="#4a4a4a" stroke-width="1.8" stroke-dasharray="1.5 1.3"/><circle cx="11.5" cy="4.5" r="2" fill="none" stroke="#e0e0e0" stroke-width="1.3"/><circle cx="4.5" cy="9.5" r="3.6" fill="#4a4a4a" stroke="#4a4a4a" stroke-width="1.8" stroke-dasharray="1.5 1.3"/><circle cx="4.5" cy="9.5" r="2" fill="none" stroke="#e0e0e0" stroke-width="1.3"/><path d="M10 8.5h3v3h3v3h-3v2.5h-3v-2.5H7v-3h3z" fill="#8ee030" stroke="#1a6a10" stroke-width="1"/></svg>
<div class="t" style="left:166px;top:495px;font-size:10.6px;color:#fff">10092062</div>
<div class="t" style="left:315px;top:495px;font-size:10.6px;color:#fff;transform:translateX(-100%)">10000878</div>
<div class="t" style="left:320px;top:495px;font-size:10.6px;color:#fff">Salé</div>
<div class="t" style="left:420px;top:495px;font-size:10.6px;color:#fff">LABO 44</div>
<div class="a" style="left:17px;top:514px;width:724px;height:20px;background:#8580b8"></div>
<svg class="ic" style="left:7px;top:520px" width="9" height="8" viewBox="0 0 9 8"><path d="M0 4h8M5 1l3 3-3 3" fill="none" stroke="#5a5a9a" stroke-width="1"/></svg>
<div class="t" style="left:106px;top:517px;font-size:10.5px;color:#f4e4d4;transform:translateX(-50%) scaleX(.92)">0%</div>
<svg class="ic" style="left:146px;top:514px" width="17" height="17" viewBox="0 0 17 17"><circle cx="11.5" cy="4.5" r="3.6" fill="#4a4a4a" stroke="#4a4a4a" stroke-width="1.8" stroke-dasharray="1.5 1.3"/><circle cx="11.5" cy="4.5" r="2" fill="none" stroke="#e0e0e0" stroke-width="1.3"/><circle cx="4.5" cy="9.5" r="3.6" fill="#4a4a4a" stroke="#4a4a4a" stroke-width="1.8" stroke-dasharray="1.5 1.3"/><circle cx="4.5" cy="9.5" r="2" fill="none" stroke="#e0e0e0" stroke-width="1.3"/><path d="M10 8.5h3v3h3v3h-3v2.5h-3v-2.5H7v-3h3z" fill="#8ee030" stroke="#1a6a10" stroke-width="1"/></svg>
<div class="t" style="left:166px;top:516px;font-size:10.6px;color:#fff">10092674</div>
<div class="t" style="left:315px;top:516px;font-size:10.6px;color:#fff;transform:translateX(-100%)">8005831</div>
<div class="a" style="left:319px;top:514px;width:99px;height:20px;background:#fff;border-top:1px dotted #333;border-bottom:1px dotted #333"></div>
<div class="t" style="left:320px;top:516px;font-size:10.6px;color:#e00">Salé</div>
<div class="a" style="left:17px;top:514px;width:302px;height:20px;border-top:1px dotted #555;border-bottom:1px dotted #555;border-left:1px dotted #555"></div>
<div class="a" style="left:418px;top:514px;width:323px;height:20px;border-top:1px dotted #555;border-bottom:1px dotted #555"></div>
<div class="t" style="left:420px;top:516px;font-size:10.6px;color:#fff">LABO 44</div>
<div class="a" style="left:17px;top:535px;width:724px;height:20px;background:#8580b8"></div>
<svg class="ic" style="left:7px;top:541px" width="9" height="8" viewBox="0 0 9 8"><path d="M0 4h8M5 1l3 3-3 3" fill="none" stroke="#b0b0c8" stroke-width="1"/></svg>
<div class="t" style="left:106px;top:538px;font-size:10.5px;color:#f4e4d4;transform:translateX(-50%) scaleX(.92)">0%</div>
<svg class="ic" style="left:146px;top:535px" width="17" height="17" viewBox="0 0 17 17"><circle cx="11.5" cy="4.5" r="3.6" fill="#4a4a4a" stroke="#4a4a4a" stroke-width="1.8" stroke-dasharray="1.5 1.3"/><circle cx="11.5" cy="4.5" r="2" fill="none" stroke="#e0e0e0" stroke-width="1.3"/><circle cx="4.5" cy="9.5" r="3.6" fill="#4a4a4a" stroke="#4a4a4a" stroke-width="1.8" stroke-dasharray="1.5 1.3"/><circle cx="4.5" cy="9.5" r="2" fill="none" stroke="#e0e0e0" stroke-width="1.3"/><path d="M10 8.5h3v3h3v3h-3v2.5h-3v-2.5H7v-3h3z" fill="#8ee030" stroke="#1a6a10" stroke-width="1"/></svg>
<div class="t" style="left:166px;top:537px;font-size:10.6px;color:#fff">10092678</div>
<div class="t" style="left:315px;top:537px;font-size:10.6px;color:#fff;transform:translateX(-100%)">8005825</div>
<div class="t" style="left:320px;top:537px;font-size:10.6px;color:#fff">Salé</div>
<div class="t" style="left:420px;top:537px;font-size:10.6px;color:#fff">LABO 44</div>
<div class="a" style="left:17px;top:556px;width:724px;height:20px;background:#8580b8"></div>
<svg class="ic" style="left:7px;top:562px" width="9" height="8" viewBox="0 0 9 8"><path d="M0 4h8M5 1l3 3-3 3" fill="none" stroke="#b0b0c8" stroke-width="1"/></svg>
<div class="t" style="left:106px;top:559px;font-size:10.5px;color:#f4e4d4;transform:translateX(-50%) scaleX(.92)">0%</div>
<svg class="ic" style="left:146px;top:556px" width="17" height="17" viewBox="0 0 17 17"><circle cx="11.5" cy="4.5" r="3.6" fill="#4a4a4a" stroke="#4a4a4a" stroke-width="1.8" stroke-dasharray="1.5 1.3"/><circle cx="11.5" cy="4.5" r="2" fill="none" stroke="#e0e0e0" stroke-width="1.3"/><circle cx="4.5" cy="9.5" r="3.6" fill="#4a4a4a" stroke="#4a4a4a" stroke-width="1.8" stroke-dasharray="1.5 1.3"/><circle cx="4.5" cy="9.5" r="2" fill="none" stroke="#e0e0e0" stroke-width="1.3"/><path d="M10 8.5h3v3h3v3h-3v2.5h-3v-2.5H7v-3h3z" fill="#8ee030" stroke="#1a6a10" stroke-width="1"/></svg>
<div class="t" style="left:166px;top:558px;font-size:10.6px;color:#fff">10092634</div>
<div class="t" style="left:315px;top:558px;font-size:10.6px;color:#fff;transform:translateX(-100%)">10006705</div>
<div class="t" style="left:320px;top:558px;font-size:10.6px;color:#fff">Salé</div>
<div class="t" style="left:420px;top:558px;font-size:10.6px;color:#fff">LABO 44</div>
<div class="a" style="left:17px;top:577px;width:724px;height:20px;background:#8580b8"></div>
<svg class="ic" style="left:7px;top:583px" width="9" height="8" viewBox="0 0 9 8"><path d="M0 4h8M5 1l3 3-3 3" fill="none" stroke="#b0b0c8" stroke-width="1"/></svg>
<div class="t" style="left:106px;top:580px;font-size:10.5px;color:#f4e4d4;transform:translateX(-50%) scaleX(.92)">0%</div>
<svg class="ic" style="left:146px;top:577px" width="17" height="17" viewBox="0 0 17 17"><circle cx="11.5" cy="4.5" r="3.6" fill="#4a4a4a" stroke="#4a4a4a" stroke-width="1.8" stroke-dasharray="1.5 1.3"/><circle cx="11.5" cy="4.5" r="2" fill="none" stroke="#e0e0e0" stroke-width="1.3"/><circle cx="4.5" cy="9.5" r="3.6" fill="#4a4a4a" stroke="#4a4a4a" stroke-width="1.8" stroke-dasharray="1.5 1.3"/><circle cx="4.5" cy="9.5" r="2" fill="none" stroke="#e0e0e0" stroke-width="1.3"/><path d="M10 8.5h3v3h3v3h-3v2.5h-3v-2.5H7v-3h3z" fill="#8ee030" stroke="#1a6a10" stroke-width="1"/></svg>
<div class="t" style="left:166px;top:579px;font-size:10.6px;color:#fff">10092635</div>
<div class="t" style="left:315px;top:579px;font-size:10.6px;color:#fff;transform:translateX(-100%)">10006709</div>
<div class="t" style="left:320px;top:579px;font-size:10.6px;color:#fff">Salé</div>
<div class="t" style="left:420px;top:579px;font-size:10.6px;color:#fff">LABO 44</div>
<div class="a" style="left:17px;top:598px;width:724px;height:20px;background:#8580b8"></div>
<svg class="ic" style="left:7px;top:604px" width="9" height="8" viewBox="0 0 9 8"><path d="M0 4h8M5 1l3 3-3 3" fill="none" stroke="#b0b0c8" stroke-width="1"/></svg>
<div class="t" style="left:106px;top:601px;font-size:10.5px;color:#f4e4d4;transform:translateX(-50%) scaleX(.92)">0%</div>
<svg class="ic" style="left:146px;top:598px" width="17" height="17" viewBox="0 0 17 17"><circle cx="11.5" cy="4.5" r="3.6" fill="#4a4a4a" stroke="#4a4a4a" stroke-width="1.8" stroke-dasharray="1.5 1.3"/><circle cx="11.5" cy="4.5" r="2" fill="none" stroke="#e0e0e0" stroke-width="1.3"/><circle cx="4.5" cy="9.5" r="3.6" fill="#4a4a4a" stroke="#4a4a4a" stroke-width="1.8" stroke-dasharray="1.5 1.3"/><circle cx="4.5" cy="9.5" r="2" fill="none" stroke="#e0e0e0" stroke-width="1.3"/><path d="M10 8.5h3v3h3v3h-3v2.5h-3v-2.5H7v-3h3z" fill="#8ee030" stroke="#1a6a10" stroke-width="1"/></svg>
<div class="t" style="left:166px;top:600px;font-size:10.6px;color:#fff">10092636</div>
<div class="t" style="left:315px;top:600px;font-size:10.6px;color:#fff;transform:translateX(-100%)">10006716</div>
<div class="t" style="left:320px;top:600px;font-size:10.6px;color:#fff">Salé</div>
<div class="t" style="left:420px;top:600px;font-size:10.6px;color:#fff">LABO 44</div>
<div class="a" style="left:17px;top:619px;width:724px;height:20px;background:#8580b8"></div>
<svg class="ic" style="left:7px;top:625px" width="9" height="8" viewBox="0 0 9 8"><path d="M0 4h8M5 1l3 3-3 3" fill="none" stroke="#b0b0c8" stroke-width="1"/></svg>
<div class="t" style="left:106px;top:622px;font-size:10.5px;color:#f4e4d4;transform:translateX(-50%) scaleX(.92)">0%</div>
<svg class="ic" style="left:146px;top:619px" width="17" height="17" viewBox="0 0 17 17"><circle cx="11.5" cy="4.5" r="3.6" fill="#4a4a4a" stroke="#4a4a4a" stroke-width="1.8" stroke-dasharray="1.5 1.3"/><circle cx="11.5" cy="4.5" r="2" fill="none" stroke="#e0e0e0" stroke-width="1.3"/><circle cx="4.5" cy="9.5" r="3.6" fill="#4a4a4a" stroke="#4a4a4a" stroke-width="1.8" stroke-dasharray="1.5 1.3"/><circle cx="4.5" cy="9.5" r="2" fill="none" stroke="#e0e0e0" stroke-width="1.3"/><path d="M10 8.5h3v3h3v3h-3v2.5h-3v-2.5H7v-3h3z" fill="#8ee030" stroke="#1a6a10" stroke-width="1"/></svg>
<div class="t" style="left:166px;top:621px;font-size:10.6px;color:#fff">10092637</div>
<div class="t" style="left:315px;top:621px;font-size:10.6px;color:#fff;transform:translateX(-100%)">10006688</div>
<div class="t" style="left:320px;top:621px;font-size:10.6px;color:#fff">Salé</div>
<div class="t" style="left:420px;top:621px;font-size:10.6px;color:#fff">LABO 44</div>
<div class="a" style="left:17px;top:640px;width:724px;height:20px;background:#8580b8"></div>
<svg class="ic" style="left:7px;top:646px" width="9" height="8" viewBox="0 0 9 8"><path d="M0 4h8M5 1l3 3-3 3" fill="none" stroke="#b0b0c8" stroke-width="1"/></svg>
<div class="t" style="left:106px;top:643px;font-size:10.5px;color:#f4e4d4;transform:translateX(-50%) scaleX(.92)">0%</div>
<svg class="ic" style="left:146px;top:640px" width="17" height="17" viewBox="0 0 17 17"><circle cx="11.5" cy="4.5" r="3.6" fill="#4a4a4a" stroke="#4a4a4a" stroke-width="1.8" stroke-dasharray="1.5 1.3"/><circle cx="11.5" cy="4.5" r="2" fill="none" stroke="#e0e0e0" stroke-width="1.3"/><circle cx="4.5" cy="9.5" r="3.6" fill="#4a4a4a" stroke="#4a4a4a" stroke-width="1.8" stroke-dasharray="1.5 1.3"/><circle cx="4.5" cy="9.5" r="2" fill="none" stroke="#e0e0e0" stroke-width="1.3"/><path d="M10 8.5h3v3h3v3h-3v2.5h-3v-2.5H7v-3h3z" fill="#8ee030" stroke="#1a6a10" stroke-width="1"/></svg>
<div class="t" style="left:166px;top:642px;font-size:10.6px;color:#fff">10092638</div>
<div class="t" style="left:315px;top:642px;font-size:10.6px;color:#fff;transform:translateX(-100%)">8003459</div>
<div class="t" style="left:320px;top:642px;font-size:10.6px;color:#fff">Sucré</div>
<div class="t" style="left:420px;top:642px;font-size:10.6px;color:#fff">LABO 44</div>
<div class="a" style="left:17px;top:661px;width:724px;height:20px;background:#8580b8"></div>
<svg class="ic" style="left:7px;top:667px" width="9" height="8" viewBox="0 0 9 8"><path d="M0 4h8M5 1l3 3-3 3" fill="none" stroke="#b0b0c8" stroke-width="1"/></svg>
<div class="t" style="left:106px;top:664px;font-size:10.5px;color:#f4e4d4;transform:translateX(-50%) scaleX(.92)">0%</div>
<svg class="ic" style="left:146px;top:661px" width="17" height="17" viewBox="0 0 17 17"><circle cx="11.5" cy="4.5" r="3.6" fill="#4a4a4a" stroke="#4a4a4a" stroke-width="1.8" stroke-dasharray="1.5 1.3"/><circle cx="11.5" cy="4.5" r="2" fill="none" stroke="#e0e0e0" stroke-width="1.3"/><circle cx="4.5" cy="9.5" r="3.6" fill="#4a4a4a" stroke="#4a4a4a" stroke-width="1.8" stroke-dasharray="1.5 1.3"/><circle cx="4.5" cy="9.5" r="2" fill="none" stroke="#e0e0e0" stroke-width="1.3"/><path d="M10 8.5h3v3h3v3h-3v2.5h-3v-2.5H7v-3h3z" fill="#8ee030" stroke="#1a6a10" stroke-width="1"/></svg>
<div class="t" style="left:166px;top:663px;font-size:10.6px;color:#fff">10092639</div>
<div class="t" style="left:315px;top:663px;font-size:10.6px;color:#fff;transform:translateX(-100%)">10001266</div>
<div class="t" style="left:320px;top:663px;font-size:10.6px;color:#fff">Sucré</div>
<div class="t" style="left:420px;top:663px;font-size:10.6px;color:#fff">LABO 44</div>
<div class="a" style="left:17px;top:682px;width:724px;height:20px;background:#8580b8"></div>
<svg class="ic" style="left:7px;top:688px" width="9" height="8" viewBox="0 0 9 8"><path d="M0 4h8M5 1l3 3-3 3" fill="none" stroke="#b0b0c8" stroke-width="1"/></svg>
<div class="t" style="left:106px;top:685px;font-size:10.5px;color:#f4e4d4;transform:translateX(-50%) scaleX(.92)">0%</div>
<svg class="ic" style="left:146px;top:682px" width="17" height="17" viewBox="0 0 17 17"><circle cx="11.5" cy="4.5" r="3.6" fill="#4a4a4a" stroke="#4a4a4a" stroke-width="1.8" stroke-dasharray="1.5 1.3"/><circle cx="11.5" cy="4.5" r="2" fill="none" stroke="#e0e0e0" stroke-width="1.3"/><circle cx="4.5" cy="9.5" r="3.6" fill="#4a4a4a" stroke="#4a4a4a" stroke-width="1.8" stroke-dasharray="1.5 1.3"/><circle cx="4.5" cy="9.5" r="2" fill="none" stroke="#e0e0e0" stroke-width="1.3"/><path d="M10 8.5h3v3h3v3h-3v2.5h-3v-2.5H7v-3h3z" fill="#8ee030" stroke="#1a6a10" stroke-width="1"/></svg>
<div class="t" style="left:166px;top:684px;font-size:10.6px;color:#fff">10092640</div>
<div class="t" style="left:315px;top:684px;font-size:10.6px;color:#fff;transform:translateX(-100%)">10001268</div>
<div class="t" style="left:320px;top:684px;font-size:10.6px;color:#fff">Sucré</div>
<div class="t" style="left:420px;top:684px;font-size:10.6px;color:#fff">LABO 44</div>
<div class="a" style="left:17px;top:703px;width:724px;height:20px;background:#8580b8"></div>
<svg class="ic" style="left:7px;top:709px" width="9" height="8" viewBox="0 0 9 8"><path d="M0 4h8M5 1l3 3-3 3" fill="none" stroke="#b0b0c8" stroke-width="1"/></svg>
<div class="t" style="left:106px;top:706px;font-size:10.5px;color:#f4e4d4;transform:translateX(-50%) scaleX(.92)">0%</div>
<svg class="ic" style="left:146px;top:703px" width="17" height="17" viewBox="0 0 17 17"><circle cx="11.5" cy="4.5" r="3.6" fill="#4a4a4a" stroke="#4a4a4a" stroke-width="1.8" stroke-dasharray="1.5 1.3"/><circle cx="11.5" cy="4.5" r="2" fill="none" stroke="#e0e0e0" stroke-width="1.3"/><circle cx="4.5" cy="9.5" r="3.6" fill="#4a4a4a" stroke="#4a4a4a" stroke-width="1.8" stroke-dasharray="1.5 1.3"/><circle cx="4.5" cy="9.5" r="2" fill="none" stroke="#e0e0e0" stroke-width="1.3"/><path d="M10 8.5h3v3h3v3h-3v2.5h-3v-2.5H7v-3h3z" fill="#8ee030" stroke="#1a6a10" stroke-width="1"/></svg>
<div class="t" style="left:166px;top:705px;font-size:10.6px;color:#fff">10092339</div>
<div class="t" style="left:315px;top:705px;font-size:10.6px;color:#fff;transform:translateX(-100%)">8005825</div>
<div class="t" style="left:320px;top:705px;font-size:10.6px;color:#fff">Salé</div>
<div class="t" style="left:420px;top:705px;font-size:10.6px;color:#fff">LABO 44</div>
<div class="a" style="left:17px;top:724px;width:724px;height:20px;background:#8580b8"></div>
<svg class="ic" style="left:7px;top:730px" width="9" height="8" viewBox="0 0 9 8"><path d="M0 4h8M5 1l3 3-3 3" fill="none" stroke="#b0b0c8" stroke-width="1"/></svg>
<div class="t" style="left:106px;top:727px;font-size:10.5px;color:#f4e4d4;transform:translateX(-50%) scaleX(.92)">0%</div>
<svg class="ic" style="left:146px;top:724px" width="17" height="17" viewBox="0 0 17 17"><circle cx="11.5" cy="4.5" r="3.6" fill="#4a4a4a" stroke="#4a4a4a" stroke-width="1.8" stroke-dasharray="1.5 1.3"/><circle cx="11.5" cy="4.5" r="2" fill="none" stroke="#e0e0e0" stroke-width="1.3"/><circle cx="4.5" cy="9.5" r="3.6" fill="#4a4a4a" stroke="#4a4a4a" stroke-width="1.8" stroke-dasharray="1.5 1.3"/><circle cx="4.5" cy="9.5" r="2" fill="none" stroke="#e0e0e0" stroke-width="1.3"/><path d="M10 8.5h3v3h3v3h-3v2.5h-3v-2.5H7v-3h3z" fill="#8ee030" stroke="#1a6a10" stroke-width="1"/></svg>
<div class="t" style="left:166px;top:726px;font-size:10.6px;color:#fff">10092342</div>
<div class="t" style="left:315px;top:726px;font-size:10.6px;color:#fff;transform:translateX(-100%)">8005831</div>
<div class="t" style="left:320px;top:726px;font-size:10.6px;color:#fff">Salé</div>
<div class="t" style="left:420px;top:726px;font-size:10.6px;color:#fff">LABO 44</div>
<div class="a" style="left:17px;top:745px;width:724px;height:20px;background:#8580b8"></div>
<svg class="ic" style="left:7px;top:751px" width="9" height="8" viewBox="0 0 9 8"><path d="M0 4h8M5 1l3 3-3 3" fill="none" stroke="#b0b0c8" stroke-width="1"/></svg>
<div class="t" style="left:106px;top:748px;font-size:10.5px;color:#f4e4d4;transform:translateX(-50%) scaleX(.92)">0%</div>
<svg class="ic" style="left:146px;top:745px" width="17" height="17" viewBox="0 0 17 17"><circle cx="11.5" cy="4.5" r="3.6" fill="#4a4a4a" stroke="#4a4a4a" stroke-width="1.8" stroke-dasharray="1.5 1.3"/><circle cx="11.5" cy="4.5" r="2" fill="none" stroke="#e0e0e0" stroke-width="1.3"/><circle cx="4.5" cy="9.5" r="3.6" fill="#4a4a4a" stroke="#4a4a4a" stroke-width="1.8" stroke-dasharray="1.5 1.3"/><circle cx="4.5" cy="9.5" r="2" fill="none" stroke="#e0e0e0" stroke-width="1.3"/><path d="M10 8.5h3v3h3v3h-3v2.5h-3v-2.5H7v-3h3z" fill="#8ee030" stroke="#1a6a10" stroke-width="1"/></svg>
<div class="t" style="left:166px;top:747px;font-size:10.6px;color:#fff">10092020</div>
<div class="t" style="left:315px;top:747px;font-size:10.6px;color:#fff;transform:translateX(-100%)">8005829</div>
<div class="t" style="left:320px;top:747px;font-size:10.6px;color:#fff">Salé</div>
<div class="t" style="left:420px;top:747px;font-size:10.6px;color:#fff">LABO 44</div>
<div class="a" style="left:17px;top:766px;width:724px;height:20px;background:#8580b8"></div>
<svg class="ic" style="left:7px;top:772px" width="9" height="8" viewBox="0 0 9 8"><path d="M0 4h8M5 1l3 3-3 3" fill="none" stroke="#b0b0c8" stroke-width="1"/></svg>
<div class="t" style="left:106px;top:769px;font-size:10.5px;color:#f4e4d4;transform:translateX(-50%) scaleX(.92)">0%</div>
<svg class="ic" style="left:146px;top:766px" width="17" height="17" viewBox="0 0 17 17"><circle cx="11.5" cy="4.5" r="3.6" fill="#4a4a4a" stroke="#4a4a4a" stroke-width="1.8" stroke-dasharray="1.5 1.3"/><circle cx="11.5" cy="4.5" r="2" fill="none" stroke="#e0e0e0" stroke-width="1.3"/><circle cx="4.5" cy="9.5" r="3.6" fill="#4a4a4a" stroke="#4a4a4a" stroke-width="1.8" stroke-dasharray="1.5 1.3"/><circle cx="4.5" cy="9.5" r="2" fill="none" stroke="#e0e0e0" stroke-width="1.3"/><path d="M10 8.5h3v3h3v3h-3v2.5h-3v-2.5H7v-3h3z" fill="#8ee030" stroke="#1a6a10" stroke-width="1"/></svg>
<div class="t" style="left:166px;top:768px;font-size:10.6px;color:#fff">10092034</div>
<div class="t" style="left:315px;top:768px;font-size:10.6px;color:#fff;transform:translateX(-100%)">8005831</div>
<div class="t" style="left:320px;top:768px;font-size:10.6px;color:#fff">Salé</div>
<div class="t" style="left:420px;top:768px;font-size:10.6px;color:#fff">LABO 44</div>
<div class="a" style="left:17px;top:787px;width:724px;height:20px;background:#8580b8"></div>
<svg class="ic" style="left:7px;top:793px" width="9" height="8" viewBox="0 0 9 8"><path d="M0 4h8M5 1l3 3-3 3" fill="none" stroke="#b0b0c8" stroke-width="1"/></svg>
<div class="t" style="left:106px;top:790px;font-size:10.5px;color:#f4e4d4;transform:translateX(-50%) scaleX(.92)">0%</div>
<svg class="ic" style="left:146px;top:787px" width="17" height="17" viewBox="0 0 17 17"><circle cx="11.5" cy="4.5" r="3.6" fill="#4a4a4a" stroke="#4a4a4a" stroke-width="1.8" stroke-dasharray="1.5 1.3"/><circle cx="11.5" cy="4.5" r="2" fill="none" stroke="#e0e0e0" stroke-width="1.3"/><circle cx="4.5" cy="9.5" r="3.6" fill="#4a4a4a" stroke="#4a4a4a" stroke-width="1.8" stroke-dasharray="1.5 1.3"/><circle cx="4.5" cy="9.5" r="2" fill="none" stroke="#e0e0e0" stroke-width="1.3"/><path d="M10 8.5h3v3h3v3h-3v2.5h-3v-2.5H7v-3h3z" fill="#8ee030" stroke="#1a6a10" stroke-width="1"/></svg>
<div class="t" style="left:166px;top:789px;font-size:10.6px;color:#fff">10092185</div>
<div class="t" style="left:315px;top:789px;font-size:10.6px;color:#fff;transform:translateX(-100%)">8004831</div>
<div class="t" style="left:320px;top:789px;font-size:10.6px;color:#fff">Salé</div>
<div class="t" style="left:420px;top:789px;font-size:10.6px;color:#fff">LABO 44</div>
<div class="a" style="left:17px;top:808px;width:724px;height:20px;background:#8580b8"></div>
<svg class="ic" style="left:7px;top:814px" width="9" height="8" viewBox="0 0 9 8"><path d="M0 4h8M5 1l3 3-3 3" fill="none" stroke="#b0b0c8" stroke-width="1"/></svg>
<div class="t" style="left:106px;top:811px;font-size:10.5px;color:#f4e4d4;transform:translateX(-50%) scaleX(.92)">0%</div>
<svg class="ic" style="left:146px;top:808px" width="17" height="17" viewBox="0 0 17 17"><circle cx="11.5" cy="4.5" r="3.6" fill="#4a4a4a" stroke="#4a4a4a" stroke-width="1.8" stroke-dasharray="1.5 1.3"/><circle cx="11.5" cy="4.5" r="2" fill="none" stroke="#e0e0e0" stroke-width="1.3"/><circle cx="4.5" cy="9.5" r="3.6" fill="#4a4a4a" stroke="#4a4a4a" stroke-width="1.8" stroke-dasharray="1.5 1.3"/><circle cx="4.5" cy="9.5" r="2" fill="none" stroke="#e0e0e0" stroke-width="1.3"/><path d="M10 8.5h3v3h3v3h-3v2.5h-3v-2.5H7v-3h3z" fill="#8ee030" stroke="#1a6a10" stroke-width="1"/></svg>
<div class="t" style="left:166px;top:810px;font-size:10.6px;color:#fff">10092187</div>
<div class="t" style="left:315px;top:810px;font-size:10.6px;color:#fff;transform:translateX(-100%)">10006726</div>
<div class="t" style="left:320px;top:810px;font-size:10.6px;color:#fff">Salé</div>
<div class="t" style="left:420px;top:810px;font-size:10.6px;color:#fff">LABO 44</div>
<div class="a" style="left:17px;top:829px;width:724px;height:20px;background:#8580b8"></div>
<svg class="ic" style="left:7px;top:835px" width="9" height="8" viewBox="0 0 9 8"><path d="M0 4h8M5 1l3 3-3 3" fill="none" stroke="#b0b0c8" stroke-width="1"/></svg>
<div class="t" style="left:106px;top:832px;font-size:10.5px;color:#f4e4d4;transform:translateX(-50%) scaleX(.92)">0%</div>
<svg class="ic" style="left:146px;top:829px" width="17" height="17" viewBox="0 0 17 17"><circle cx="11.5" cy="4.5" r="3.6" fill="#4a4a4a" stroke="#4a4a4a" stroke-width="1.8" stroke-dasharray="1.5 1.3"/><circle cx="11.5" cy="4.5" r="2" fill="none" stroke="#e0e0e0" stroke-width="1.3"/><circle cx="4.5" cy="9.5" r="3.6" fill="#4a4a4a" stroke="#4a4a4a" stroke-width="1.8" stroke-dasharray="1.5 1.3"/><circle cx="4.5" cy="9.5" r="2" fill="none" stroke="#e0e0e0" stroke-width="1.3"/><path d="M10 8.5h3v3h3v3h-3v2.5h-3v-2.5H7v-3h3z" fill="#8ee030" stroke="#1a6a10" stroke-width="1"/></svg>
<div class="t" style="left:166px;top:831px;font-size:10.6px;color:#fff">10092188</div>
<div class="t" style="left:315px;top:831px;font-size:10.6px;color:#fff;transform:translateX(-100%)">10006745</div>
<div class="t" style="left:320px;top:831px;font-size:10.6px;color:#fff">Salé</div>
<div class="t" style="left:420px;top:831px;font-size:10.6px;color:#fff">LABO 44</div>
<div class="a" style="left:17px;top:850px;width:724px;height:20px;background:#8580b8"></div>
<svg class="ic" style="left:7px;top:856px" width="9" height="8" viewBox="0 0 9 8"><path d="M0 4h8M5 1l3 3-3 3" fill="none" stroke="#b0b0c8" stroke-width="1"/></svg>
<div class="t" style="left:106px;top:853px;font-size:10.5px;color:#f4e4d4;transform:translateX(-50%) scaleX(.92)">0%</div>
<svg class="ic" style="left:146px;top:850px" width="17" height="17" viewBox="0 0 17 17"><circle cx="11.5" cy="4.5" r="3.6" fill="#4a4a4a" stroke="#4a4a4a" stroke-width="1.8" stroke-dasharray="1.5 1.3"/><circle cx="11.5" cy="4.5" r="2" fill="none" stroke="#e0e0e0" stroke-width="1.3"/><circle cx="4.5" cy="9.5" r="3.6" fill="#4a4a4a" stroke="#4a4a4a" stroke-width="1.8" stroke-dasharray="1.5 1.3"/><circle cx="4.5" cy="9.5" r="2" fill="none" stroke="#e0e0e0" stroke-width="1.3"/><path d="M10 8.5h3v3h3v3h-3v2.5h-3v-2.5H7v-3h3z" fill="#8ee030" stroke="#1a6a10" stroke-width="1"/></svg>
<div class="t" style="left:166px;top:852px;font-size:10.6px;color:#fff">10092190</div>
<div class="t" style="left:315px;top:852px;font-size:10.6px;color:#fff;transform:translateX(-100%)">10001266</div>
<div class="t" style="left:320px;top:852px;font-size:10.6px;color:#fff">Sucré</div>
<div class="t" style="left:420px;top:852px;font-size:10.6px;color:#fff">LABO 44</div>
<div class="a" style="left:17px;top:871px;width:724px;height:20px;background:#8580b8"></div>
<svg class="ic" style="left:7px;top:877px" width="9" height="8" viewBox="0 0 9 8"><path d="M0 4h8M5 1l3 3-3 3" fill="none" stroke="#b0b0c8" stroke-width="1"/></svg>
<div class="t" style="left:106px;top:874px;font-size:10.5px;color:#f4e4d4;transform:translateX(-50%) scaleX(.92)">0%</div>
<svg class="ic" style="left:146px;top:871px" width="17" height="17" viewBox="0 0 17 17"><circle cx="11.5" cy="4.5" r="3.6" fill="#4a4a4a" stroke="#4a4a4a" stroke-width="1.8" stroke-dasharray="1.5 1.3"/><circle cx="11.5" cy="4.5" r="2" fill="none" stroke="#e0e0e0" stroke-width="1.3"/><circle cx="4.5" cy="9.5" r="3.6" fill="#4a4a4a" stroke="#4a4a4a" stroke-width="1.8" stroke-dasharray="1.5 1.3"/><circle cx="4.5" cy="9.5" r="2" fill="none" stroke="#e0e0e0" stroke-width="1.3"/><path d="M10 8.5h3v3h3v3h-3v2.5h-3v-2.5H7v-3h3z" fill="#8ee030" stroke="#1a6a10" stroke-width="1"/></svg>
<div class="t" style="left:166px;top:873px;font-size:10.6px;color:#fff">10092191</div>
<div class="t" style="left:315px;top:873px;font-size:10.6px;color:#fff;transform:translateX(-100%)">10001268</div>
<div class="t" style="left:320px;top:873px;font-size:10.6px;color:#fff">Sucré</div>
<div class="t" style="left:420px;top:873px;font-size:10.6px;color:#fff">LABO 44</div>
<div class="a" style="left:17px;top:892px;width:724px;height:20px;background:#8580b8"></div>
<svg class="ic" style="left:7px;top:898px" width="9" height="8" viewBox="0 0 9 8"><path d="M0 4h8M5 1l3 3-3 3" fill="none" stroke="#b0b0c8" stroke-width="1"/></svg>
<div class="t" style="left:106px;top:895px;font-size:10.5px;color:#f4e4d4;transform:translateX(-50%) scaleX(.92)">0%</div>
<svg class="ic" style="left:146px;top:892px" width="17" height="17" viewBox="0 0 17 17"><circle cx="11.5" cy="4.5" r="3.6" fill="#4a4a4a" stroke="#4a4a4a" stroke-width="1.8" stroke-dasharray="1.5 1.3"/><circle cx="11.5" cy="4.5" r="2" fill="none" stroke="#e0e0e0" stroke-width="1.3"/><circle cx="4.5" cy="9.5" r="3.6" fill="#4a4a4a" stroke="#4a4a4a" stroke-width="1.8" stroke-dasharray="1.5 1.3"/><circle cx="4.5" cy="9.5" r="2" fill="none" stroke="#e0e0e0" stroke-width="1.3"/><path d="M10 8.5h3v3h3v3h-3v2.5h-3v-2.5H7v-3h3z" fill="#8ee030" stroke="#1a6a10" stroke-width="1"/></svg>
<div class="t" style="left:166px;top:894px;font-size:10.6px;color:#fff">10092192</div>
<div class="t" style="left:315px;top:894px;font-size:10.6px;color:#fff;transform:translateX(-100%)">10001269</div>
<div class="t" style="left:320px;top:894px;font-size:10.6px;color:#fff">Sucré</div>
<div class="t" style="left:420px;top:894px;font-size:10.6px;color:#fff">LABO 44</div>
<div class="a" style="left:17px;top:913px;width:724px;height:20px;background:#8580b8"></div>
<svg class="ic" style="left:7px;top:919px" width="9" height="8" viewBox="0 0 9 8"><path d="M0 4h8M5 1l3 3-3 3" fill="none" stroke="#b0b0c8" stroke-width="1"/></svg>
<div class="t" style="left:106px;top:916px;font-size:10.5px;color:#f4e4d4;transform:translateX(-50%) scaleX(.92)">0%</div>
<svg class="ic" style="left:146px;top:913px" width="17" height="17" viewBox="0 0 17 17"><circle cx="11.5" cy="4.5" r="3.6" fill="#4a4a4a" stroke="#4a4a4a" stroke-width="1.8" stroke-dasharray="1.5 1.3"/><circle cx="11.5" cy="4.5" r="2" fill="none" stroke="#e0e0e0" stroke-width="1.3"/><circle cx="4.5" cy="9.5" r="3.6" fill="#4a4a4a" stroke="#4a4a4a" stroke-width="1.8" stroke-dasharray="1.5 1.3"/><circle cx="4.5" cy="9.5" r="2" fill="none" stroke="#e0e0e0" stroke-width="1.3"/><path d="M10 8.5h3v3h3v3h-3v2.5h-3v-2.5H7v-3h3z" fill="#8ee030" stroke="#1a6a10" stroke-width="1"/></svg>
<div class="t" style="left:166px;top:915px;font-size:10.6px;color:#fff">10092193</div>
<div class="t" style="left:315px;top:915px;font-size:10.6px;color:#fff;transform:translateX(-100%)">8005461</div>
<div class="t" style="left:320px;top:915px;font-size:10.6px;color:#fff">Sucré</div>
<div class="t" style="left:420px;top:915px;font-size:10.6px;color:#fff">LABO 44</div>
<div class="a" style="left:17px;top:934px;width:724px;height:20px;background:#8580b8"></div>
<svg class="ic" style="left:7px;top:940px" width="9" height="8" viewBox="0 0 9 8"><path d="M0 4h8M5 1l3 3-3 3" fill="none" stroke="#b0b0c8" stroke-width="1"/></svg>
<div class="t" style="left:106px;top:937px;font-size:10.5px;color:#f4e4d4;transform:translateX(-50%) scaleX(.92)">0%</div>
<svg class="ic" style="left:146px;top:934px" width="17" height="17" viewBox="0 0 17 17"><circle cx="11.5" cy="4.5" r="3.6" fill="#4a4a4a" stroke="#4a4a4a" stroke-width="1.8" stroke-dasharray="1.5 1.3"/><circle cx="11.5" cy="4.5" r="2" fill="none" stroke="#e0e0e0" stroke-width="1.3"/><circle cx="4.5" cy="9.5" r="3.6" fill="#4a4a4a" stroke="#4a4a4a" stroke-width="1.8" stroke-dasharray="1.5 1.3"/><circle cx="4.5" cy="9.5" r="2" fill="none" stroke="#e0e0e0" stroke-width="1.3"/><path d="M10 8.5h3v3h3v3h-3v2.5h-3v-2.5H7v-3h3z" fill="#8ee030" stroke="#1a6a10" stroke-width="1"/></svg>
<div class="t" style="left:166px;top:936px;font-size:10.6px;color:#fff">10092194</div>
<div class="t" style="left:315px;top:936px;font-size:10.6px;color:#fff;transform:translateX(-100%)">8003413</div>
<div class="t" style="left:320px;top:936px;font-size:10.6px;color:#fff">Salé</div>
<div class="t" style="left:420px;top:936px;font-size:10.6px;color:#fff">LABO 44</div>
<div class="a" style="left:17px;top:955px;width:724px;height:19px;background:#8580b8"></div>
<svg class="ic" style="left:7px;top:961px" width="9" height="8" viewBox="0 0 9 8"><path d="M0 4h8M5 1l3 3-3 3" fill="none" stroke="#b0b0c8" stroke-width="1"/></svg>
<div class="t" style="left:106px;top:958px;font-size:10.5px;color:#f4e4d4;transform:translateX(-50%) scaleX(.92)">0%</div>
<svg class="ic" style="left:146px;top:955px" width="17" height="17" viewBox="0 0 17 17"><circle cx="11.5" cy="4.5" r="3.6" fill="#4a4a4a" stroke="#4a4a4a" stroke-width="1.8" stroke-dasharray="1.5 1.3"/><circle cx="11.5" cy="4.5" r="2" fill="none" stroke="#e0e0e0" stroke-width="1.3"/><circle cx="4.5" cy="9.5" r="3.6" fill="#4a4a4a" stroke="#4a4a4a" stroke-width="1.8" stroke-dasharray="1.5 1.3"/><circle cx="4.5" cy="9.5" r="2" fill="none" stroke="#e0e0e0" stroke-width="1.3"/><path d="M10 8.5h3v3h3v3h-3v2.5h-3v-2.5H7v-3h3z" fill="#8ee030" stroke="#1a6a10" stroke-width="1"/></svg>
<div class="t" style="left:166px;top:957px;font-size:10.6px;color:#fff">10092195</div>
<div class="t" style="left:315px;top:957px;font-size:10.6px;color:#fff;transform:translateX(-100%)">10006719</div>
<div class="t" style="left:320px;top:957px;font-size:10.6px;color:#fff">Salé</div>
<div class="t" style="left:420px;top:957px;font-size:10.6px;color:#fff">LABO 44</div>
<div class="a" style="left:69px;top:430px;width:1px;height:544px;background:#fff"></div>
<div class="a" style="left:143px;top:430px;width:1px;height:544px;background:#fff"></div>
<div class="a" style="left:256px;top:430px;width:1px;height:544px;background:#fff"></div>
<div class="a" style="left:318px;top:430px;width:1px;height:544px;background:#fff"></div>
<div class="a" style="left:418px;top:430px;width:1px;height:544px;background:#fff"></div>
<div class="a" style="left:741px;top:342px;width:17px;height:632px;background:#f0f0f0"></div>
<svg class="ic" style="left:745px;top:346px" width="9" height="6"><path d="M0 5.5L4.5 .5 9 5.5z" fill="#666"/></svg>
<div class="a" style="left:741px;top:359px;width:17px;height:23px;background:#dadada"></div>
<svg class="ic" style="left:745px;top:962px" width="9" height="6"><path d="M0 .5h9L4.5 5.5z" fill="#666"/></svg>
<!-- nav bar -->
<div class="a" style="left:5px;top:974px;width:753px;height:19px;background:#efefef"></div>
<div class="a" style="left:56px;top:974px;width:57px;height:19px;background:#fff"></div>
<div class="a" style="left:180px;top:974px;width:51px;height:19px;background:#fff"></div>
<div class="a" style="left:248px;top:974px;width:95px;height:19px;background:#dcdcdc"></div>
<div class="a" style="left:741px;top:974px;width:17px;height:19px;background:#fff"></div>
<div class="t" style="left:62px;top:978px;font-size:10.7px;color:#333">5 sur 648</div>
<svg class="ic" style="left:8px;top:979px" width="180" height="9" viewBox="0 0 180 9">
<g fill="#606890">
<rect x="0" y="1" width="1.5" height="7"/><path d="M9 1v7L5 4.5zM5 1v7L1.5 4.5z"/>
<path d="M22 1v7l-4-3.5zM26 1v7l-4-3.5z"/>
<path d="M40 1v7l-4-3.5z"/>
<path d="M110 1v7l4-3.5z"/>
<path d="M127 1v7l4-3.5zM131 1v7l4-3.5z"/>
<path d="M143 1v7l4-3.5zM147 1v7l4-3.5z"/><rect x="151" y="1" width="1.5" height="7"/>
<path d="M159 0h13l-5 4.5v4.5h-3V4.5z"/>
</g></svg>
<svg class="ic" style="left:236px;top:979px" width="6" height="9"><path d="M5 .5v8L.5 4.5z" fill="#777"/></svg>
<svg class="ic" style="left:729px;top:979px" width="6" height="9"><path d="M.5 .5v8L5 4.5z" fill="#777"/></svg>
<!-- ================= RIGHT PANEL ================= -->
<div class="a" style="left:773px;top:337px;width:1147px;height:661px;border:1px solid #c8c8c8;background:#fff"></div>
<div class="a" style="left:776px;top:343px;width:1px;height:8px;background:#6a64b0"></div>
<!-- card 1 -->
<div class="a" style="left:787px;top:351px;width:668px;height:159px;border:1px solid #dde3ee;background:#fff"></div>
<div class="a" style="left:787px;top:351px;width:668px;height:30px;background:#e9ecf5;border-bottom:1px solid #dde3ee"></div>
<svg class="ic" style="left:795px;top:358px" width="16" height="16" viewBox="0 0 16 16"><path d="M2 14L8.5 7.5" stroke="#555" stroke-width="2.8" stroke-linecap="round"/><path d="M2 14L8.5 7.5" stroke="#ccc" stroke-width="1.2" stroke-linecap="round"/><ellipse cx="10.5" cy="5" rx="4.6" ry="3.4" transform="rotate(40 10.5 5)" fill="#aaa" stroke="#555" stroke-width="1"/><ellipse cx="10" cy="4.5" rx="2.6" ry="1.8" transform="rotate(40 10 4.5)" fill="#d0d0d0"/></svg>
<div class="t" style="left:814px;top:358px;font-size:15.4px;line-height:18px;font-weight:bold;color:#3e3882;transform:scaleX(.945);transform-origin:0 0">Bon d'assemblage</div>
<div class="t" style="left:792px;top:386px;font-size:13.8px;line-height:16px;font-weight:bold;color:#111">Produit</div>
<div class="a" style="left:797px;top:403px;width:2px;height:15px;background:#d8d8d8"></div>
<div class="t" style="left:804px;top:403px;font-size:13px;line-height:15px;color:#444;transform:scaleX(.93);transform-origin:0 0">Assortiment de fromages EG (10grs) - ardoise, pics</div>
<div class="t" style="left:792px;top:425px;font-size:13.8px;line-height:16px;font-weight:bold;color:#111">Quantité lancée</div>
<div class="a" style="left:797px;top:442px;width:2px;height:15px;background:#d8d8d8"></div>
<div class="t" style="left:804px;top:442px;font-size:13px;line-height:15px;color:#444;transform:scaleX(.93);transform-origin:0 0">1240.00000</div>
<div class="t" style="left:792px;top:464px;font-size:13.8px;line-height:16px;font-weight:bold;color:#111">Quantité commandée</div>
<div class="a" style="left:797px;top:481px;width:2px;height:15px;background:#d8d8d8"></div>
<div class="t" style="left:804px;top:481px;font-size:13px;line-height:15px;color:#444;transform:scaleX(.93);transform-origin:0 0">700.00000</div>
<!-- card sommaire -->
<div class="a" style="left:1465px;top:351px;width:442px;height:159px;border:1px solid #dde3ee;background:#fff"></div>
<div class="a" style="left:1465px;top:351px;width:442px;height:30px;background:#e9ecf5;border-bottom:1px solid #dde3ee"></div>
<svg class="ic" style="left:1473px;top:358px" width="16" height="16" viewBox="0 0 16 16"><circle cx="9.5" cy="6.5" r="5.5" fill="#a8dcf8" stroke="#5a6a90" stroke-width="1.2"/><circle cx="8.5" cy="5" r="2" fill="#e8f8ff"/><path d="M5.5 10.5L1.5 14.5" stroke="#e89a20" stroke-width="2.5" stroke-linecap="round"/></svg>
<div class="t" style="left:1492px;top:358px;font-size:15.4px;line-height:18px;font-weight:bold;color:#3e3882;transform:scaleX(.945);transform-origin:0 0">Sommaire</div>
<div class="a" style="left:1470px;top:390px;width:5px;height:6px;border-radius:50%;background:#111"></div>
<div class="t" style="left:1480px;top:385px;font-size:13.6px;line-height:16px;color:#1a6ac8">Recette</div>
<!-- card recette -->
<div class="a" style="left:787px;top:520px;width:1120px;height:296px;border:1px solid #dde3ee;background:#fff"></div>
<div class="a" style="left:787px;top:520px;width:1120px;height:30px;background:#e9ecf5;border-bottom:1px solid #dde3ee"></div>
<svg class="ic" style="left:795px;top:527px" width="16" height="16" viewBox="0 0 16 16"><path d="M2 14L8.5 7.5" stroke="#555" stroke-width="2.8" stroke-linecap="round"/><path d="M2 14L8.5 7.5" stroke="#ccc" stroke-width="1.2" stroke-linecap="round"/><ellipse cx="10.5" cy="5" rx="4.6" ry="3.4" transform="rotate(40 10.5 5)" fill="#aaa" stroke="#555" stroke-width="1"/><ellipse cx="10" cy="4.5" rx="2.6" ry="1.8" transform="rotate(40 10 4.5)" fill="#d0d0d0"/></svg>
<div class="t" style="left:814px;top:527px;font-size:15.4px;line-height:18px;font-weight:bold;color:#3e3882;transform:scaleX(.945);transform-origin:0 0">Recette</div>
<div class="a" style="left:790px;top:552px;width:1113px;height:260px;border:1px solid #d8dce6;background:#fff"></div>
<div class="a" style="left:790px;top:552px;width:1113px;height:27px;background:#f08a17"></div>
<div class="a" style="left:791px;top:579px;width:1111px;height:26px;background:#fff"></div>
<div class="t" style="left:796px;top:585px;font-size:13.6px;line-height:15px;color:#1a6ac8;text-decoration:underline">7020752</div>
<div class="t" style="left:985px;top:585px;font-size:13.6px;line-height:15px;color:#222">Mimolette pain 24 % 3 kg</div>
<div class="t" style="left:1452px;top:585px;font-size:13.6px;line-height:15px;color:#222">2.480000</div>
<div class="t" style="left:1650px;top:585px;font-size:13.6px;line-height:15px;color:#222">KILOGRAMME</div>
<div class="a" style="left:791px;top:605px;width:1111px;height:26px;background:#f9f9f9"></div>
<div class="t" style="left:796px;top:611px;font-size:13.6px;line-height:15px;color:#1a6ac8;text-decoration:underline">7016678</div>
<div class="t" style="left:985px;top:611px;font-size:13.6px;line-height:15px;color:#222">Saint Nectaire fermier AOP</div>
<div class="t" style="left:1452px;top:611px;font-size:13.6px;line-height:15px;color:#222">2.480000</div>
<div class="t" style="left:1650px;top:611px;font-size:13.6px;line-height:15px;color:#222">KILOGRAMME</div>
<div class="a" style="left:791px;top:631px;width:1111px;height:25px;background:#fff"></div>
<div class="t" style="left:796px;top:637px;font-size:13.6px;line-height:15px;color:#1a6ac8;text-decoration:underline">7014452</div>
<div class="t" style="left:985px;top:637px;font-size:13.6px;line-height:15px;color:#222">Comte 45 %</div>
<div class="t" style="left:1452px;top:637px;font-size:13.6px;line-height:15px;color:#222">2.480000</div>
<div class="t" style="left:1650px;top:637px;font-size:13.6px;line-height:15px;color:#222">KILOGRAMME</div>
<div class="a" style="left:791px;top:656px;width:1111px;height:26px;background:#f9f9f9"></div>
<div class="t" style="left:796px;top:662px;font-size:13.6px;line-height:15px;color:#1a6ac8;text-decoration:underline">7016604</div>
<div class="t" style="left:985px;top:662px;font-size:13.6px;line-height:15px;color:#222">Crotin de chevre</div>
<div class="t" style="left:1452px;top:662px;font-size:13.6px;line-height:15px;color:#222">12.400000</div>
<div class="t" style="left:1650px;top:662px;font-size:13.6px;line-height:15px;color:#222">PIECE</div>
<div class="a" style="left:791px;top:682px;width:1111px;height:26px;background:#fff"></div>
<div class="t" style="left:796px;top:688px;font-size:13.6px;line-height:15px;color:#1a6ac8;text-decoration:underline">7014456</div>
<div class="t" style="left:985px;top:688px;font-size:13.6px;line-height:15px;color:#222">Fourme d'ambert</div>
<div class="t" style="left:1452px;top:688px;font-size:13.6px;line-height:15px;color:#222">2.480000</div>
<div class="t" style="left:1650px;top:688px;font-size:13.6px;line-height:15px;color:#222">KILOGRAMME</div>
<div class="a" style="left:791px;top:708px;width:1111px;height:26px;background:#f9f9f9"></div>
<div class="t" style="left:796px;top:714px;font-size:13.6px;line-height:15px;color:#1a6ac8;text-decoration:underline">10000517</div>
<div class="t" style="left:985px;top:714px;font-size:13.6px;line-height:15px;color:#222">Budget déco</div>
<div class="t" style="left:1452px;top:714px;font-size:13.6px;line-height:15px;color:#222"></div>
<div class="t" style="left:1650px;top:714px;font-size:13.6px;line-height:15px;color:#222"></div>
<div class="a" style="left:791px;top:734px;width:1111px;height:26px;background:#fff"></div>
<div class="t" style="left:796px;top:740px;font-size:13.6px;line-height:15px;color:#1a6ac8;text-decoration:underline">7014146</div>
<div class="t" style="left:985px;top:740px;font-size:13.6px;line-height:15px;color:#222">Cure dent vrac 6 cm x1000</div>
<div class="t" style="left:1452px;top:740px;font-size:13.6px;line-height:15px;color:#222">1.240000</div>
<div class="t" style="left:1650px;top:740px;font-size:13.6px;line-height:15px;color:#222">BOITE</div>
<div class="a" style="left:791px;top:760px;width:1111px;height:26px;background:#f9f9f9"></div>
<div class="t" style="left:796px;top:766px;font-size:13.6px;line-height:15px;color:#1a6ac8;text-decoration:underline">8003765</div>
<div class="t" style="left:985px;top:766px;font-size:13.6px;line-height:15px;color:#222">Ardoise 32 x 22 économat</div>
<div class="t" style="left:1452px;top:766px;font-size:13.6px;line-height:15px;color:#222">62.000000</div>
<div class="t" style="left:1650px;top:766px;font-size:13.6px;line-height:15px;color:#222">PIECE</div>
<div class="a" style="left:791px;top:786px;width:1111px;height:25px;background:#fff"></div>
<div class="t" style="left:796px;top:792px;font-size:13.6px;line-height:15px;color:#1a6ac8;text-decoration:underline">7014428</div>
<div class="t" style="left:985px;top:792px;font-size:13.6px;line-height:15px;color:#222">Beurre demi sel 500 gr</div>
<div class="t" style="left:1452px;top:792px;font-size:13.6px;line-height:15px;color:#222">1.240000</div>
<div class="t" style="left:1650px;top:792px;font-size:13.6px;line-height:15px;color:#222">KILOGRAMME</div>
<div class="a" style="left:979px;top:552px;width:1px;height:260px;background:#d8dce6"></div>
<div class="a" style="left:979px;top:552px;width:1px;height:27px;background:#f5b060"></div>
<div class="a" style="left:1446px;top:552px;width:1px;height:260px;background:#d8dce6"></div>
<div class="a" style="left:1446px;top:552px;width:1px;height:27px;background:#f5b060"></div>
<div class="a" style="left:1644px;top:552px;width:1px;height:260px;background:#d8dce6"></div>
<div class="a" style="left:1644px;top:552px;width:1px;height:27px;background:#f5b060"></div>
<div class="t" style="left:885px;top:558px;font-size:13px;line-height:15px;font-weight:bold;color:#fff;letter-spacing:.45px;transform:translateX(-50%)">.</div>
<div class="t" style="left:1212px;top:558px;font-size:13px;line-height:15px;font-weight:bold;color:#fff;letter-spacing:.45px;transform:translateX(-50%)">Composé de</div>
<div class="t" style="left:1545px;top:558px;font-size:13px;line-height:15px;font-weight:bold;color:#fff;letter-spacing:.45px;transform:translateX(-50%)">Quantité</div>
<div class="t" style="left:1773px;top:558px;font-size:13px;line-height:15px;font-weight:bold;color:#fff;letter-spacing:.45px;transform:translateX(-50%)">Unité</div>
<!-- ================= STATUS BAR ================= -->
<div class="a" style="left:0;top:997px;width:1920px;height:20px;background:#e1e1e1;border-top:1px solid #d0d0d0"></div>
<div class="t" style="left:2px;top:1001px;font-size:10.8px;color:#333">Editer</div>
<div class="a" style="left:62px;top:998px;width:1px;height:18px;background:#444"></div>
<svg class="ic" style="left:67px;top:1001px" width="12" height="12" viewBox="0 0 12 12"><path d="M4.5 .5h3v4h4v3h-4v4h-3v-4h-4v-3h4z" fill="#c8dcf0" stroke="#223050" stroke-width="1"/></svg>
<div class="t" style="left:84px;top:1001px;font-size:10.8px;color:#333">Créé le 27/12/2023 16:25:55 par GJEAN</div>
<div class="a" style="left:315px;top:998px;width:1px;height:18px;background:#444"></div>
<svg class="ic" style="left:321px;top:1003px" width="12" height="8" viewBox="0 0 12 8"><path d="M.5 7.5L6 1l5.5 6.5z" fill="#a8cce8" stroke="#223050" stroke-width="1"/></svg>
<div class="t" style="left:336px;top:1001px;font-size:10.8px;color:#333">Modifié le 28/12/2023 06:40:47 par DVINCENT</div>
<div class="a" style="left:568px;top:998px;width:1px;height:18px;background:#444"></div>
<div class="a" style="left:822px;top:998px;width:1px;height:18px;background:#666"></div>
<div class="a" style="left:1870px;top:998px;width:20px;height:19px;background:#efefef;border:1px solid #c4c4c4"></div>
<svg class="ic" style="left:1872px;top:999px" width="16" height="16" viewBox="0 0 16 16"><defs><linearGradient id="hg" x1="0" y1="0" x2="1" y2="1"><stop offset="0" stop-color="#6a88b0"/><stop offset="1" stop-color="#8aa8c8"/></linearGradient></defs><circle cx="8" cy="8" r="6.8" fill="url(#hg)" stroke="#1e3a60" stroke-width="1"/><path d="M6 6.2q0-2 2-2t2 1.8q0 1.2-1.2 1.8T8 9.3v.6" fill="none" stroke="#fff" stroke-width="1.6"/><rect x="7.1" y="10.8" width="1.8" height="1.6" fill="#fff"/></svg>
<!-- bottom bar -->
<div class="a" style="left:0;top:1017px;width:1920px;height:19px;background:#8580b8"></div>
<div class="a" style="left:0;top:1017px;width:22px;height:19px;background:#ececec"></div>
<div class="a" style="left:3px;top:1020px;width:16px;height:16px;background:#fff;border:1px solid #333"></div>
<svg class="ic" style="left:5px;top:1022px" width="13" height="13" viewBox="0 0 13 13"><path d="M2 12c0-5 3-7 6-7V2l4 4-4 4V8c-2 0-4 1-6 4z" fill="#1f5ab8"/></svg>
<div class="a" style="left:25px;top:1017px;width:1px;height:19px;background:#a5a0d0"></div>
<div class="t" style="left:30px;top:1022px;font-size:10.5px;color:#e8101a">BEDHQ-ATH01\ATHENEO : ATHENEO_COM_V3 : MLEBEU</div>
<div class="a" style="left:432px;top:1017px;width:1px;height:19px;background:#a5a0d0"></div>
<div class="t" style="left:437px;top:1022px;font-size:11.3px;color:#e8101a">Gestion des sessions</div>
<div class="a" style="left:583px;top:1017px;width:1px;height:19px;background:#a5a0d0"></div>

<!-- ================= CONTEXT MENU ================= -->
<div class="a" style="left:337px;top:532px;width:219px;height:330px;background:#fff;border:1px solid #b8b8b8;box-shadow:1px 1px 1px rgba(0,0,0,.08)"></div>
<div class="a" style="left:338px;top:533px;width:25px;height:328px;background:#f0f0f0;border-right:1px solid #dcdcdc"></div>
<div class="a" style="left:334px;top:633px;width:220px;height:23px;background:#ffff00"></div>
<div class="t" style="left:371px;top:539px;font-size:11.8px;color:#222">Créer</div>
<div class="t" style="left:545px;top:539px;font-size:11.8px;color:#222;transform:translateX(-100%)">Alt+C</div>
<div class="t" style="left:371px;top:563px;font-size:11.8px;color:#222">Modifier</div>
<div class="t" style="left:545px;top:563px;font-size:11.8px;color:#222;transform:translateX(-100%)">Alt+M</div>
<div class="t" style="left:371px;top:587px;font-size:11.8px;color:#222">Supprimer</div>
<div class="t" style="left:545px;top:587px;font-size:11.8px;color:#222;transform:translateX(-100%)">Alt+S</div>
<div class="t" style="left:371px;top:611px;font-size:11.8px;color:#222">Rechercher dans la liste</div>
<div class="t" style="left:545px;top:611px;font-size:11.8px;color:#222;transform:translateX(-100%)">Ctrl+F</div>
<div class="t" style="left:371px;top:638px;font-size:11.8px;color:#222">Editer</div>
<div class="t" style="left:545px;top:638px;font-size:11.8px;color:#222;transform:translateX(-100%)">Alt+E</div>
<div class="t" style="left:371px;top:662px;font-size:11.8px;color:#222">Imprimer</div>
<div class="t" style="left:371px;top:689px;font-size:11.8px;color:#222">Valider le bon d'assemblage</div>
<div class="t" style="left:371px;top:713px;font-size:11.8px;color:#222">Calcul du besoin net</div>
<div class="t" style="left:371px;top:737px;font-size:11.8px;color:#222">Planifier une action</div>
<div class="t" style="left:371px;top:764px;font-size:11.8px;color:#222">Raccourcis</div>
<svg class="ic" style="left:545px;top:766px" width="5" height="8"><path d="M0 0v8l4.5-4z" fill="#222"/></svg>
<div class="t" style="left:371px;top:791px;font-size:11.8px;color:#222">Sélection</div>
<svg class="ic" style="left:545px;top:793px" width="5" height="8"><path d="M0 0v8l4.5-4z" fill="#222"/></svg>
<div class="t" style="left:371px;top:818px;font-size:11.8px;color:#222">Paramétrer</div>
<svg class="ic" style="left:545px;top:820px" width="5" height="8"><path d="M0 0v8l4.5-4z" fill="#222"/></svg>
<div class="t" style="left:371px;top:842px;font-size:11.8px;color:#222">Actualiser</div>
<div class="t" style="left:545px;top:842px;font-size:11.8px;color:#222;transform:translateX(-100%)">F5</div>
<div class="a" style="left:365px;top:631px;width:188px;height:1px;background:#dcdcdc"></div>
<div class="a" style="left:365px;top:682px;width:188px;height:1px;background:#dcdcdc"></div>
<div class="a" style="left:365px;top:757px;width:188px;height:1px;background:#dcdcdc"></div>
<div class="a" style="left:365px;top:784px;width:188px;height:1px;background:#dcdcdc"></div>
<div class="a" style="left:365px;top:811px;width:188px;height:1px;background:#dcdcdc"></div>
<svg class="ic" style="left:344px;top:539px" width="13" height="13" viewBox="0 0 13 13"><path d="M4.5 .5h4v4h4v4h-4v4h-4v-4h-4v-4h4z" fill="#c8dcf0" stroke="#334a70" stroke-width="1"/></svg>
<svg class="ic" style="left:344px;top:565px" width="13" height="8" viewBox="0 0 13 8"><path d="M.5 7.5L6.5 1l6 6.5z" fill="#a8cce8" stroke="#445a70" stroke-width=".9"/></svg>
<svg class="ic" style="left:344px;top:591px" width="12" height="5"><rect x=".5" y=".5" width="11" height="3.5" rx="1.7" fill="#f08a4a" stroke="#905030" stroke-width=".8"/></svg>
<svg class="ic" style="left:342px;top:609px" width="16" height="16" viewBox="0 0 16 16"><circle cx="6.5" cy="6.5" r="5.5" fill="#a8dcf8" stroke="#5a8ab0" stroke-width="1.2"/><circle cx="5.5" cy="5" r="2" fill="#e8f8ff"/><path d="M10.5 10.5l3.5 3.5" stroke="#e89a20" stroke-width="2.5" stroke-linecap="round"/></svg>
<svg class="ic" style="left:342px;top:636px" width="16" height="16" viewBox="0 0 16 16"><path d="M4.5 7V1.5h5l2 2V7" fill="#e8f060" stroke="#707010" stroke-width="1"/><rect x="1" y="6.5" width="14" height="6" rx="2" fill="#d8e040" stroke="#606010" stroke-width="1"/><rect x="4" y="10.5" width="8" height="4" fill="#f0f8a0" stroke="#707010" stroke-width="1"/></svg>
<svg class="ic" style="left:342px;top:660px" width="16" height="16" viewBox="0 0 16 16"><path d="M4.5 7V1.5h5l2 2V7" fill="#c8e0f8" stroke="#3a70b0" stroke-width="1"/><rect x="1" y="6.5" width="14" height="6" rx="2" fill="#e0e0e0" stroke="#505050" stroke-width="1"/><rect x="4" y="10.5" width="8" height="4" fill="#fff" stroke="#3a70b0" stroke-width="1"/></svg>
<svg class="ic" style="left:343px;top:687px" width="15" height="16" viewBox="0 0 15 16"><rect x=".5" y=".5" width="14" height="15" fill="#fff" stroke="#6a7a90"/><path d="M3 4h9M3 6.5h9" stroke="#999"/><path d="M4 10l2.5 2.5L11 8" stroke="#2a70c8" stroke-width="1.5" fill="none"/></svg>
<svg class="ic" style="left:342px;top:711px" width="16" height="16" viewBox="0 0 16 16"><path d="M1 2l6 3 3-2 5 10-6 2-2-5-6-1z" fill="#f08020"/><path d="M6 9l3 5 5-2-3-6z" fill="#f8c040"/></svg>
<svg class="ic" style="left:344px;top:737px" width="13" height="14" viewBox="0 0 13 14"><rect x=".5" y="1.5" width="12" height="12" fill="#fff" stroke="#2a5aa8"/><rect x="1" y="1" width="11" height="3" fill="#2a5aa8"/><text x="6.5" y="12" font-size="6.5" text-anchor="middle" fill="#1a3a80" font-family="Liberation Sans" font-weight="bold">14</text></svg>
<svg class="ic" style="left:341px;top:838px" width="18" height="20" viewBox="0 0 18 20"><path d="M3 9.5A6 6 0 0 1 13 5l1.5-2.5v7h-6.5L11 7A3.5 3.5 0 0 0 5.5 9.5z" fill="#5aaee8" stroke="#2a78b8" stroke-width=".8"/><path d="M15 10.5A6 6 0 0 1 5 15l-1.5 2.5v-7h6.5L7 13a3.5 3.5 0 0 0 5.5-2.5z" fill="#5aaee8" stroke="#2a78b8" stroke-width=".8"/></svg>
</body></html>
